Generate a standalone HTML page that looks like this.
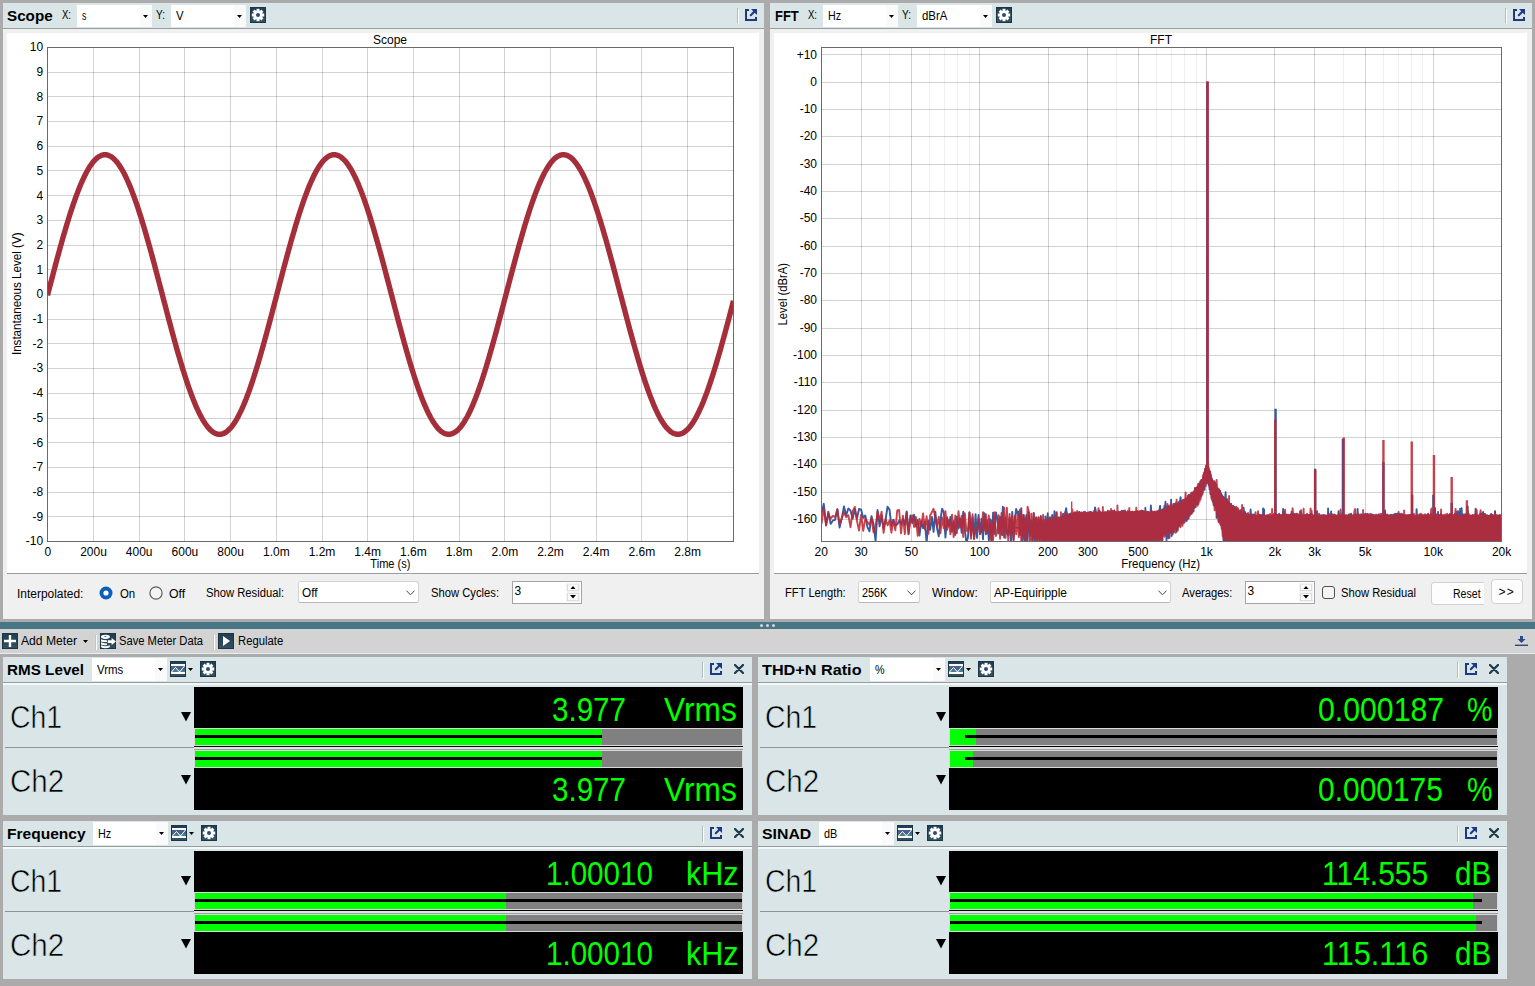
<!DOCTYPE html>
<html><head><meta charset="utf-8"><title>APx500 - Scope / FFT / Meters</title>
<style>
html,body{margin:0;padding:0}
body{width:1535px;height:986px;background:#ababab;position:relative;overflow:hidden;font-family:"Liberation Sans",sans-serif;font-size:12px}
.b,.a{position:absolute;display:block}
section{display:contents}
.t{position:absolute;display:inline-block;white-space:nowrap;transform-origin:0 0}
</style></head><body>
<svg class="a" width="0" height="0" style="left:0;top:0"><defs><linearGradient id="sl" x1="0" y1="0" x2="0" y2="1"><stop offset="0" stop-color="#213e51"/><stop offset="1" stop-color="#36505f"/></linearGradient></defs></svg>
<section aria-label="Scope panel">
<div class="b" style="left:3px;top:3px;width:761px;height:616px;background:#f0f0f0;"></div>
<div class="b" style="left:3px;top:3px;width:761px;height:25px;background:#dae5e7;"></div>
<div class="b" style="left:3px;top:28px;width:761px;height:1px;background:#979c9e;"></div>
<div class="b" style="left:7px;top:33px;width:752px;height:540px;background:#fff;"></div>
<div class="b" style="left:7px;top:573px;width:752px;height:1px;background:#9c9c9c;"></div>
<span class="t" style="left:7.30px;top:7px;font-size:15px;line-height:17px;color:#000;font-weight:bold;transform:scaleX(1.0133);">Scope</span>
<span class="t" style="left:62.40px;top:8.3px;font-size:12px;line-height:14px;color:#000;transform:scaleX(0.7956);">X:</span>
<div class="b" style="left:77px;top:5px;width:75px;height:22px;background:#fff;"></div>
<div class="b" style="left:140px;top:5px;width:12px;height:22px;background:#fafafa;"></div>
<svg class="a" style="left:143px;top:15px" width="5" height="3" viewBox="0 0 5 3"><path d="M0 0H5L2.5 3Z" fill="#000"/></svg>
<span class="t" style="left:81.50px;top:8.5px;font-size:12px;line-height:14px;color:#000;transform:scaleX(0.7333);">s</span>
<span class="t" style="left:156.00px;top:8.3px;font-size:12px;line-height:14px;color:#000;transform:scaleX(0.8421);">Y:</span>
<div class="b" style="left:171px;top:5px;width:75px;height:22px;background:#fff;"></div>
<div class="b" style="left:234px;top:5px;width:12px;height:22px;background:#fafafa;"></div>
<svg class="a" style="left:237px;top:15px" width="5" height="3" viewBox="0 0 5 3"><path d="M0 0H5L2.5 3Z" fill="#000"/></svg>
<span class="t" style="left:175.50px;top:8.5px;font-size:12px;line-height:14px;color:#000;transform:scaleX(0.9500);">V</span>
<svg class="a" style="left:250px;top:7px" width="16" height="16" viewBox="0 0 16 16"><rect width="16" height="16" fill="#1a374a"/><rect x="1" y="1" width="14" height="14" fill="url(#sl)"/><g transform="translate(8,8)" fill="#fff"><rect x="-1.5" y="-6.2" width="3" height="3" transform="rotate(0)"/><rect x="-1.5" y="-6.2" width="3" height="3" transform="rotate(45)"/><rect x="-1.5" y="-6.2" width="3" height="3" transform="rotate(90)"/><rect x="-1.5" y="-6.2" width="3" height="3" transform="rotate(135)"/><rect x="-1.5" y="-6.2" width="3" height="3" transform="rotate(180)"/><rect x="-1.5" y="-6.2" width="3" height="3" transform="rotate(225)"/><rect x="-1.5" y="-6.2" width="3" height="3" transform="rotate(270)"/><rect x="-1.5" y="-6.2" width="3" height="3" transform="rotate(315)"/><circle r="4.6"/><circle r="2" fill="#2f4a78"/></g></svg>
<div class="b" style="left:737px;top:8px;width:1px;height:15px;background:#b4bcbe;"></div>
<div class="b" style="left:738px;top:9px;width:1px;height:15px;background:#fff;"></div>
<svg class="a" style="left:745px;top:9px" width="12" height="12" viewBox="0 0 12 12"><path d="M4 0H0V12H12V8H10V10H2V2H4Z" fill="#1b3a82"/><path d="M6 0H12V6Z" fill="#1b3a82"/><path d="M10 2L5.8 6.2" stroke="#1b3a82" stroke-width="2" stroke-linecap="round"/></svg>
</section>
<section aria-label="FFT panel">
<div class="b" style="left:770px;top:3px;width:762px;height:616px;background:#f0f0f0;"></div>
<div class="b" style="left:770px;top:3px;width:762px;height:25px;background:#dae5e7;"></div>
<div class="b" style="left:770px;top:28px;width:762px;height:1px;background:#979c9e;"></div>
<div class="b" style="left:774px;top:33px;width:753px;height:540px;background:#fff;"></div>
<div class="b" style="left:774px;top:573px;width:753px;height:1px;background:#9c9c9c;"></div>
<span class="t" style="left:775.00px;top:7px;font-size:15px;line-height:17px;color:#000;font-weight:bold;transform:scaleX(0.8655);">FFT</span>
<span class="t" style="left:808.20px;top:8.3px;font-size:12px;line-height:14px;color:#000;transform:scaleX(0.7956);">X:</span>
<div class="b" style="left:823px;top:5px;width:75px;height:22px;background:#fff;"></div>
<div class="b" style="left:886px;top:5px;width:12px;height:22px;background:#fafafa;"></div>
<svg class="a" style="left:889px;top:15px" width="5" height="3" viewBox="0 0 5 3"><path d="M0 0H5L2.5 3Z" fill="#000"/></svg>
<span class="t" style="left:827.50px;top:8.5px;font-size:12px;line-height:14px;color:#000;transform:scaleX(0.8919);">Hz</span>
<span class="t" style="left:902.20px;top:8.3px;font-size:12px;line-height:14px;color:#000;transform:scaleX(0.8421);">Y:</span>
<div class="b" style="left:917px;top:5px;width:75px;height:22px;background:#fff;"></div>
<div class="b" style="left:980px;top:5px;width:12px;height:22px;background:#fafafa;"></div>
<svg class="a" style="left:983px;top:15px" width="5" height="3" viewBox="0 0 5 3"><path d="M0 0H5L2.5 3Z" fill="#000"/></svg>
<span class="t" style="left:921.50px;top:8.5px;font-size:12px;line-height:14px;color:#000;transform:scaleX(0.9518);">dBrA</span>
<svg class="a" style="left:996px;top:7px" width="16" height="16" viewBox="0 0 16 16"><rect width="16" height="16" fill="#1a374a"/><rect x="1" y="1" width="14" height="14" fill="url(#sl)"/><g transform="translate(8,8)" fill="#fff"><rect x="-1.5" y="-6.2" width="3" height="3" transform="rotate(0)"/><rect x="-1.5" y="-6.2" width="3" height="3" transform="rotate(45)"/><rect x="-1.5" y="-6.2" width="3" height="3" transform="rotate(90)"/><rect x="-1.5" y="-6.2" width="3" height="3" transform="rotate(135)"/><rect x="-1.5" y="-6.2" width="3" height="3" transform="rotate(180)"/><rect x="-1.5" y="-6.2" width="3" height="3" transform="rotate(225)"/><rect x="-1.5" y="-6.2" width="3" height="3" transform="rotate(270)"/><rect x="-1.5" y="-6.2" width="3" height="3" transform="rotate(315)"/><circle r="4.6"/><circle r="2" fill="#2f4a78"/></g></svg>
<div class="b" style="left:1505px;top:8px;width:1px;height:15px;background:#b4bcbe;"></div>
<div class="b" style="left:1506px;top:9px;width:1px;height:15px;background:#fff;"></div>
<svg class="a" style="left:1513px;top:9px" width="12" height="12" viewBox="0 0 12 12"><path d="M4 0H0V12H12V8H10V10H2V2H4Z" fill="#1b3a82"/><path d="M6 0H12V6Z" fill="#1b3a82"/><path d="M10 2L5.8 6.2" stroke="#1b3a82" stroke-width="2" stroke-linecap="round"/></svg>
</section>
<section aria-label="Graphs">
<svg class="a" style="left:7px;top:33px" width="752" height="540" viewBox="7 33 752 540" font-family="Liberation Sans, sans-serif"><path d="M47.5 72.5H733.5M47.5 96.5H733.5M47.5 121.5H733.5M47.5 146.5H733.5M47.5 170.5H733.5M47.5 195.5H733.5M47.5 220.5H733.5M47.5 245.5H733.5M47.5 269.5H733.5M47.5 294.5H733.5M47.5 319.5H733.5M47.5 343.5H733.5M47.5 368.5H733.5M47.5 393.5H733.5M47.5 418.5H733.5M47.5 442.5H733.5M47.5 467.5H733.5M47.5 492.5H733.5M47.5 516.5H733.5" stroke="rgba(0,0,0,0.175)" stroke-width="1" fill="none"/><path d="M93.5 47.5V541.5M139.5 47.5V541.5M184.5 47.5V541.5M230.5 47.5V541.5M276.5 47.5V541.5M322.5 47.5V541.5M367.5 47.5V541.5M413.5 47.5V541.5M459.5 47.5V541.5M504.5 47.5V541.5M550.5 47.5V541.5M596.5 47.5V541.5M641.5 47.5V541.5M687.5 47.5V541.5" stroke="rgba(0,0,0,0.175)" stroke-width="1" fill="none"/><rect x="47.5" y="47.5" width="686.0" height="494.0" fill="none" stroke="#6a6a6a" stroke-width="1"/><clipPath id="cs"><rect x="47.5" y="47.5" width="686.0" height="494.0"/></clipPath><path clip-path="url(#cs)" d="M47.5 295.3L48.5 291.4L49.5 287.6L50.5 283.8L51.5 280.0L52.5 276.2L53.5 272.4L54.5 268.6L55.5 264.8L56.5 261.1L57.5 257.4L58.5 253.7L59.5 250.1L60.5 246.4L61.5 242.9L62.5 239.3L63.5 235.8L64.5 232.4L65.5 228.9L66.5 225.6L67.5 222.3L68.5 219.0L69.5 215.8L70.5 212.7L71.5 209.6L72.5 206.6L73.5 203.6L74.5 200.8L75.5 198.0L76.5 195.2L77.5 192.6L78.5 190.0L79.5 187.5L80.5 185.0L81.5 182.7L82.5 180.4L83.5 178.3L84.5 176.2L85.5 174.2L86.5 172.3L87.5 170.5L88.5 168.7L89.5 167.1L90.5 165.6L91.5 164.2L92.5 162.8L93.5 161.6L94.5 160.4L95.5 159.4L96.5 158.5L97.5 157.6L98.5 156.9L99.5 156.3L100.5 155.8L101.5 155.3L102.5 155.0L103.5 154.8L104.5 154.7L105.5 154.7L106.5 154.8L107.5 155.0L108.5 155.3L109.5 155.8L110.5 156.3L111.5 156.9L112.5 157.7L113.5 158.5L114.5 159.4L115.5 160.5L116.5 161.6L117.5 162.8L118.5 164.2L119.5 165.6L120.5 167.2L121.5 168.8L122.5 170.5L123.5 172.3L124.5 174.2L125.5 176.2L126.5 178.3L127.5 180.5L128.5 182.8L129.5 185.1L130.5 187.5L131.5 190.0L132.5 192.6L133.5 195.3L134.5 198.0L135.5 200.8L136.5 203.7L137.5 206.7L138.5 209.7L139.5 212.8L140.5 215.9L141.5 219.1L142.5 222.4L143.5 225.7L144.5 229.0L145.5 232.4L146.5 235.9L147.5 239.4L148.5 242.9L149.5 246.5L150.5 250.1L151.5 253.8L152.5 257.5L153.5 261.2L154.5 264.9L155.5 268.7L156.5 272.5L157.5 276.2L158.5 280.1L159.5 283.9L160.5 287.7L161.5 291.5L162.5 295.4L163.5 299.2L164.5 303.0L165.5 306.8L166.5 310.7L167.5 314.5L168.5 318.2L169.5 322.0L170.5 325.8L171.5 329.5L172.5 333.2L173.5 336.9L174.5 340.5L175.5 344.1L176.5 347.7L177.5 351.2L178.5 354.7L179.5 358.1L180.5 361.5L181.5 364.8L182.5 368.1L183.5 371.3L184.5 374.5L185.5 377.6L186.5 380.7L187.5 383.7L188.5 386.6L189.5 389.4L190.5 392.2L191.5 394.9L192.5 397.5L193.5 400.1L194.5 402.6L195.5 405.0L196.5 407.3L197.5 409.5L198.5 411.6L199.5 413.7L200.5 415.6L201.5 417.5L202.5 419.3L203.5 421.0L204.5 422.5L205.5 424.0L206.5 425.4L207.5 426.7L208.5 427.9L209.5 429.0L210.5 430.0L211.5 430.9L212.5 431.7L213.5 432.4L214.5 433.0L215.5 433.4L216.5 433.8L217.5 434.1L218.5 434.2L219.5 434.3L220.5 434.3L221.5 434.1L222.5 433.8L223.5 433.5L224.5 433.0L225.5 432.5L226.5 431.8L227.5 431.0L228.5 430.1L229.5 429.1L230.5 428.1L231.5 426.9L232.5 425.6L233.5 424.2L234.5 422.7L235.5 421.2L236.5 419.5L237.5 417.7L238.5 415.9L239.5 413.9L240.5 411.9L241.5 409.8L242.5 407.5L243.5 405.3L244.5 402.9L245.5 400.4L246.5 397.9L247.5 395.2L248.5 392.6L249.5 389.8L250.5 386.9L251.5 384.0L252.5 381.1L253.5 378.0L254.5 374.9L255.5 371.7L256.5 368.5L257.5 365.2L258.5 361.9L259.5 358.5L260.5 355.1L261.5 351.6L262.5 348.1L263.5 344.5L264.5 340.9L265.5 337.3L266.5 333.6L267.5 329.9L268.5 326.2L269.5 322.5L270.5 318.7L271.5 314.9L272.5 311.1L273.5 307.3L274.5 303.5L275.5 299.7L276.5 295.8L277.5 292.0L278.5 288.2L279.5 284.4L280.5 280.5L281.5 276.7L282.5 272.9L283.5 269.1L284.5 265.4L285.5 261.7L286.5 257.9L287.5 254.3L288.5 250.6L289.5 247.0L290.5 243.4L291.5 239.8L292.5 236.3L293.5 232.9L294.5 229.5L295.5 226.1L296.5 222.8L297.5 219.5L298.5 216.3L299.5 213.2L300.5 210.1L301.5 207.0L302.5 204.1L303.5 201.2L304.5 198.4L305.5 195.6L306.5 193.0L307.5 190.4L308.5 187.8L309.5 185.4L310.5 183.0L311.5 180.8L312.5 178.6L313.5 176.5L314.5 174.5L315.5 172.6L316.5 170.7L317.5 169.0L318.5 167.4L319.5 165.8L320.5 164.4L321.5 163.0L322.5 161.8L323.5 160.6L324.5 159.6L325.5 158.6L326.5 157.8L327.5 157.0L328.5 156.4L329.5 155.8L330.5 155.4L331.5 155.1L332.5 154.8L333.5 154.7L334.5 154.7L335.5 154.8L336.5 155.0L337.5 155.3L338.5 155.7L339.5 156.2L340.5 156.8L341.5 157.5L342.5 158.4L343.5 159.3L344.5 160.3L345.5 161.4L346.5 162.7L347.5 164.0L348.5 165.4L349.5 166.9L350.5 168.5L351.5 170.2L352.5 172.0L353.5 173.9L354.5 175.9L355.5 178.0L356.5 180.2L357.5 182.4L358.5 184.7L359.5 187.2L360.5 189.7L361.5 192.2L362.5 194.9L363.5 197.6L364.5 200.4L365.5 203.3L366.5 206.2L367.5 209.2L368.5 212.3L369.5 215.4L370.5 218.6L371.5 221.9L372.5 225.2L373.5 228.5L374.5 231.9L375.5 235.4L376.5 238.9L377.5 242.4L378.5 246.0L379.5 249.6L380.5 253.2L381.5 256.9L382.5 260.6L383.5 264.4L384.5 268.1L385.5 271.9L386.5 275.7L387.5 279.5L388.5 283.3L389.5 287.1L390.5 291.0L391.5 294.8L392.5 298.6L393.5 302.4L394.5 306.3L395.5 310.1L396.5 313.9L397.5 317.7L398.5 321.5L399.5 325.2L400.5 328.9L401.5 332.6L402.5 336.3L403.5 339.9L404.5 343.6L405.5 347.1L406.5 350.7L407.5 354.1L408.5 357.6L409.5 361.0L410.5 364.3L411.5 367.6L412.5 370.9L413.5 374.0L414.5 377.2L415.5 380.2L416.5 383.2L417.5 386.2L418.5 389.0L419.5 391.8L420.5 394.5L421.5 397.2L422.5 399.7L423.5 402.2L424.5 404.6L425.5 406.9L426.5 409.2L427.5 411.3L428.5 413.4L429.5 415.3L430.5 417.2L431.5 419.0L432.5 420.7L433.5 422.3L434.5 423.8L435.5 425.2L436.5 426.5L437.5 427.7L438.5 428.9L439.5 429.9L440.5 430.8L441.5 431.6L442.5 432.3L443.5 432.9L444.5 433.4L445.5 433.8L446.5 434.0L447.5 434.2L448.5 434.3L449.5 434.3L450.5 434.1L451.5 433.9L452.5 433.5L453.5 433.1L454.5 432.5L455.5 431.9L456.5 431.1L457.5 430.3L458.5 429.3L459.5 428.2L460.5 427.1L461.5 425.8L462.5 424.4L463.5 423.0L464.5 421.4L465.5 419.7L466.5 418.0L467.5 416.2L468.5 414.2L469.5 412.2L470.5 410.1L471.5 407.9L472.5 405.6L473.5 403.2L474.5 400.8L475.5 398.3L476.5 395.6L477.5 393.0L478.5 390.2L479.5 387.4L480.5 384.5L481.5 381.5L482.5 378.5L483.5 375.4L484.5 372.2L485.5 369.0L486.5 365.7L487.5 362.4L488.5 359.0L489.5 355.6L490.5 352.1L491.5 348.6L492.5 345.1L493.5 341.5L494.5 337.9L495.5 334.2L496.5 330.5L497.5 326.8L498.5 323.0L499.5 319.3L500.5 315.5L501.5 311.7L502.5 307.9L503.5 304.1L504.5 300.2L505.5 296.4L506.5 292.6L507.5 288.8L508.5 284.9L509.5 281.1L510.5 277.3L511.5 273.5L512.5 269.7L513.5 266.0L514.5 262.2L515.5 258.5L516.5 254.8L517.5 251.1L518.5 247.5L519.5 243.9L520.5 240.4L521.5 236.9L522.5 233.4L523.5 230.0L524.5 226.6L525.5 223.3L526.5 220.0L527.5 216.8L528.5 213.6L529.5 210.5L530.5 207.5L531.5 204.5L532.5 201.6L533.5 198.8L534.5 196.0L535.5 193.4L536.5 190.7L537.5 188.2L538.5 185.8L539.5 183.4L540.5 181.1L541.5 178.9L542.5 176.8L543.5 174.8L544.5 172.8L545.5 171.0L546.5 169.3L547.5 167.6L548.5 166.0L549.5 164.6L550.5 163.2L551.5 161.9L552.5 160.8L553.5 159.7L554.5 158.7L555.5 157.9L556.5 157.1L557.5 156.5L558.5 155.9L559.5 155.5L560.5 155.1L561.5 154.9L562.5 154.7L563.5 154.7L564.5 154.8L565.5 155.0L566.5 155.2L567.5 155.6L568.5 156.1L569.5 156.7L570.5 157.4L571.5 158.2L572.5 159.1L573.5 160.1L574.5 161.3L575.5 162.5L576.5 163.8L577.5 165.2L578.5 166.7L579.5 168.3L580.5 170.0L581.5 171.8L582.5 173.7L583.5 175.6L584.5 177.7L585.5 179.8L586.5 182.1L587.5 184.4L588.5 186.8L589.5 189.3L590.5 191.8L591.5 194.5L592.5 197.2L593.5 200.0L594.5 202.8L595.5 205.8L596.5 208.8L597.5 211.8L598.5 215.0L599.5 218.1L600.5 221.4L601.5 224.7L602.5 228.0L603.5 231.4L604.5 234.9L605.5 238.3L606.5 241.9L607.5 245.4L608.5 249.1L609.5 252.7L610.5 256.4L611.5 260.1L612.5 263.8L613.5 267.5L614.5 271.3L615.5 275.1L616.5 278.9L617.5 282.7L618.5 286.6L619.5 290.4L620.5 294.2L621.5 298.0L622.5 301.9L623.5 305.7L624.5 309.5L625.5 313.3L626.5 317.1L627.5 320.9L628.5 324.6L629.5 328.4L630.5 332.1L631.5 335.8L632.5 339.4L633.5 343.0L634.5 346.6L635.5 350.1L636.5 353.6L637.5 357.1L638.5 360.5L639.5 363.8L640.5 367.1L641.5 370.4L642.5 373.6L643.5 376.7L644.5 379.8L645.5 382.8L646.5 385.7L647.5 388.6L648.5 391.4L649.5 394.1L650.5 396.8L651.5 399.3L652.5 401.8L653.5 404.3L654.5 406.6L655.5 408.8L656.5 411.0L657.5 413.1L658.5 415.1L659.5 417.0L660.5 418.8L661.5 420.5L662.5 422.1L663.5 423.6L664.5 425.0L665.5 426.3L666.5 427.6L667.5 428.7L668.5 429.7L669.5 430.6L670.5 431.5L671.5 432.2L672.5 432.8L673.5 433.3L674.5 433.7L675.5 434.0L676.5 434.2L677.5 434.3L678.5 434.3L679.5 434.2L680.5 433.9L681.5 433.6L682.5 433.2L683.5 432.6L684.5 432.0L685.5 431.2L686.5 430.4L687.5 429.4L688.5 428.4L689.5 427.2L690.5 426.0L691.5 424.6L692.5 423.2L693.5 421.6L694.5 420.0L695.5 418.3L696.5 416.4L697.5 414.5L698.5 412.5L699.5 410.4L700.5 408.2L701.5 406.0L702.5 403.6L703.5 401.2L704.5 398.6L705.5 396.0L706.5 393.4L707.5 390.6L708.5 387.8L709.5 384.9L710.5 382.0L711.5 378.9L712.5 375.8L713.5 372.7L714.5 369.5L715.5 366.2L716.5 362.9L717.5 359.5L718.5 356.1L719.5 352.7L720.5 349.2L721.5 345.6L722.5 342.0L723.5 338.4L724.5 334.7L725.5 331.1L726.5 327.3L727.5 323.6L728.5 319.9L729.5 316.1L730.5 312.3L731.5 308.5L732.5 304.6L733.5 300.8" stroke="#a52e3b" stroke-width="5.4" fill="none" stroke-linejoin="round"/><text x="43.2" y="51.3" font-size="12" text-anchor="end" fill="#000">10</text><text x="43.2" y="76.0" font-size="12" text-anchor="end" fill="#000">9</text><text x="43.2" y="100.7" font-size="12" text-anchor="end" fill="#000">8</text><text x="43.2" y="125.4" font-size="12" text-anchor="end" fill="#000">7</text><text x="43.2" y="150.1" font-size="12" text-anchor="end" fill="#000">6</text><text x="43.2" y="174.8" font-size="12" text-anchor="end" fill="#000">5</text><text x="43.2" y="199.5" font-size="12" text-anchor="end" fill="#000">4</text><text x="43.2" y="224.2" font-size="12" text-anchor="end" fill="#000">3</text><text x="43.2" y="248.9" font-size="12" text-anchor="end" fill="#000">2</text><text x="43.2" y="273.6" font-size="12" text-anchor="end" fill="#000">1</text><text x="43.2" y="298.3" font-size="12" text-anchor="end" fill="#000">0</text><text x="43.2" y="323.0" font-size="12" text-anchor="end" fill="#000">-1</text><text x="43.2" y="347.7" font-size="12" text-anchor="end" fill="#000">-2</text><text x="43.2" y="372.4" font-size="12" text-anchor="end" fill="#000">-3</text><text x="43.2" y="397.1" font-size="12" text-anchor="end" fill="#000">-4</text><text x="43.2" y="421.8" font-size="12" text-anchor="end" fill="#000">-5</text><text x="43.2" y="446.5" font-size="12" text-anchor="end" fill="#000">-6</text><text x="43.2" y="471.2" font-size="12" text-anchor="end" fill="#000">-7</text><text x="43.2" y="495.9" font-size="12" text-anchor="end" fill="#000">-8</text><text x="43.2" y="520.6" font-size="12" text-anchor="end" fill="#000">-9</text><text x="43.2" y="545.3" font-size="12" text-anchor="end" fill="#000">-10</text><text x="47.8" y="556" font-size="12" text-anchor="middle" fill="#000">0</text><text x="93.5" y="556" font-size="12" text-anchor="middle" fill="#000">200u</text><text x="139.2" y="556" font-size="12" text-anchor="middle" fill="#000">400u</text><text x="184.9" y="556" font-size="12" text-anchor="middle" fill="#000">600u</text><text x="230.6" y="556" font-size="12" text-anchor="middle" fill="#000">800u</text><text x="276.3" y="556" font-size="12" text-anchor="middle" fill="#000">1.0m</text><text x="322.0" y="556" font-size="12" text-anchor="middle" fill="#000">1.2m</text><text x="367.7" y="556" font-size="12" text-anchor="middle" fill="#000">1.4m</text><text x="413.4" y="556" font-size="12" text-anchor="middle" fill="#000">1.6m</text><text x="459.1" y="556" font-size="12" text-anchor="middle" fill="#000">1.8m</text><text x="504.8" y="556" font-size="12" text-anchor="middle" fill="#000">2.0m</text><text x="550.5" y="556" font-size="12" text-anchor="middle" fill="#000">2.2m</text><text x="596.2" y="556" font-size="12" text-anchor="middle" fill="#000">2.4m</text><text x="641.9" y="556" font-size="12" text-anchor="middle" fill="#000">2.6m</text><text x="687.6" y="556" font-size="12" text-anchor="middle" fill="#000">2.8m</text><text x="390" y="44" font-size="12" text-anchor="middle" fill="#000">Scope</text><text x="390.4" y="568" font-size="12" text-anchor="middle" fill="#000" textLength="40.1" lengthAdjust="spacingAndGlyphs">Time (s)</text><text x="21" y="293.8" font-size="12" text-anchor="middle" fill="#000" textLength="122.6" lengthAdjust="spacingAndGlyphs" transform="rotate(-90 21 293.8)">Instantaneous Level (V)</text></svg>
<svg class="a" style="left:774px;top:33px" width="753" height="540" viewBox="774 33 753 540" font-family="Liberation Sans, sans-serif"><path d="M889.5 47.5V541.5M929.5 47.5V541.5M944.5 47.5V541.5M957.5 47.5V541.5M969.5 47.5V541.5M1116.5 47.5V541.5M1156.5 47.5V541.5M1171.5 47.5V541.5M1184.5 47.5V541.5M1196.5 47.5V541.5M1343.5 47.5V541.5M1383.5 47.5V541.5M1398.5 47.5V541.5M1411.5 47.5V541.5M1422.5 47.5V541.5" stroke="rgba(0,0,0,0.06)" stroke-width="1" fill="none"/><path d="M821.5 54.5H1501.5M821.5 82.5H1501.5M821.5 109.5H1501.5M821.5 136.5H1501.5M821.5 164.5H1501.5M821.5 191.5H1501.5M821.5 218.5H1501.5M821.5 246.5H1501.5M821.5 273.5H1501.5M821.5 300.5H1501.5M821.5 328.5H1501.5M821.5 355.5H1501.5M821.5 382.5H1501.5M821.5 410.5H1501.5M821.5 437.5H1501.5M821.5 464.5H1501.5M821.5 492.5H1501.5M821.5 519.5H1501.5" stroke="rgba(0,0,0,0.175)" stroke-width="1" fill="none"/><path d="M861.5 47.5V541.5M911.5 47.5V541.5M979.5 47.5V541.5M1048.5 47.5V541.5M1087.5 47.5V541.5M1138.5 47.5V541.5M1206.5 47.5V541.5M1274.5 47.5V541.5M1314.5 47.5V541.5M1365.5 47.5V541.5M1433.5 47.5V541.5" stroke="rgba(0,0,0,0.175)" stroke-width="1" fill="none"/><clipPath id="cf"><rect x="821.5" y="47.5" width="680.0" height="493.5"/></clipPath><g clip-path="url(#cf)"><path d="M821.50 513.1L823.80 503.8L826.09 525.5L828.36 511.7L830.63 523.9L832.88 520.5L835.12 519.8L837.35 509.1L839.57 527.5L841.78 518.3L843.97 506.5L846.16 515.3L848.33 508.5L850.49 510.4L852.64 518.8L854.78 509.1L856.91 518.9L859.02 509.0L861.13 509.7L863.23 517.9L865.31 515.4L867.38 526.8L869.45 531.3L871.50 516.1L873.54 524.0L875.57 541.2L877.59 510.0L879.60 526.2L881.60 515.8L883.59 528.6L885.57 519.5L887.54 506.7L889.50 509.6L891.45 525.7L893.39 519.6L895.32 525.6L897.23 524.5L899.14 520.6L901.04 524.2L902.93 518.8L904.81 524.8L906.68 511.4L908.54 533.7L910.39 515.4L912.23 523.1L914.06 514.8L915.88 526.6L917.70 520.0L919.50 535.6L921.29 521.1L923.08 528.2L924.85 521.5L926.62 543.4L928.37 520.6L930.12 529.8L931.86 516.9L933.59 531.9L935.31 511.7L937.02 528.1L938.73 536.4L940.42 520.0L942.11 508.6L943.78 512.4L945.45 537.5L947.11 517.3L948.76 526.6L950.41 517.0L952.04 531.9L953.66 521.3L955.28 535.0L956.89 516.7L958.49 528.6L960.08 518.5L961.67 532.7L963.24 511.7L964.81 529.7L966.37 542.8L967.92 537.8L969.47 512.6L971.00 535.7L972.53 517.2L974.05 538.4L975.56 514.2L977.06 537.9L978.56 515.0L980.05 534.1L981.53 518.6L983.00 539.2L984.47 513.3L985.93 534.3L987.38 520.1L988.82 540.2L990.26 519.3L991.68 540.8L993.10 512.6L994.52 533.9L995.92 512.5L997.32 517.9L998.71 533.2L1000.10 516.9L1001.48 534.7L1002.85 506.7L1004.21 537.5L1005.56 517.8L1006.91 533.4L1008.26 535.5L1009.59 517.7L1010.92 542.6L1012.24 511.9L1013.55 539.8L1014.86 520.2L1016.16 508.9L1017.46 513.3L1018.75 511.6L1020.03 535.3L1021.30 508.1L1022.57 544.0L1023.83 514.9L1025.08 543.1L1026.33 515.2L1027.57 542.2L1028.81 512.2L1030.04 536.0L1031.26 520.6L1032.48 541.9L1033.69 513.2L1034.89 544.9L1036.09 517.9L1037.28 540.4L1038.46 517.5L1039.64 540.3L1040.82 515.9L1041.98 546.6L1043.14 520.4L1044.30 545.9L1045.45 516.4L1046.59 545.0L1047.73 513.2L1048.86 544.0L1049.98 517.2L1051.10 545.2L1052.22 515.0L1053.33 544.6L1054.43 511.2L1055.52 545.0L1056.61 512.2L1057.70 548.7L1058.78 517.1L1059.85 546.5L1060.92 516.7L1061.99 545.8L1063.04 513.6L1064.09 546.6L1065.14 513.6L1066.18 508.1L1067.22 519.1L1068.25 545.4L1069.27 513.9L1070.29 549.6L1071.31 513.3L1072.32 546.7L1073.32 513.5L1074.32 547.7L1075.31 519.3L1076.30 550.6L1077.29 518.7L1078.27 548.1L1079.24 511.9L1080.21 544.6L1081.17 518.6L1082.13 545.6L1083.08 513.4L1084.03 547.9L1084.97 511.8L1085.91 549.6L1086.85 513.8L1087.78 550.7L1088.70 517.8L1089.62 545.9L1090.53 517.6L1091.44 548.3L1092.35 513.9L1093.25 551.2L1094.15 520.4L1095.04 507.5L1095.92 511.4L1096.81 550.8L1097.68 513.6L1098.56 542.7L1099.43 510.7L1100.29 544.5L1101.15 519.3L1102.00 551.9L1102.85 520.8L1103.70 545.6L1104.54 515.7L1105.38 552.0L1106.21 513.6L1107.04 549.3L1107.87 511.4L1108.69 542.6L1109.50 516.5L1110.32 552.1L1111.12 511.1L1111.93 550.5L1112.73 512.0L1113.52 544.0L1114.31 510.5L1115.10 551.6L1115.88 515.5L1116.66 548.1L1117.44 517.4L1118.21 548.9L1118.98 513.1L1119.74 545.1L1120.50 512.0L1121.25 548.1L1122.00 510.6L1122.75 550.8L1123.50 511.5L1124.24 549.9L1124.97 510.5L1125.70 547.8L1126.43 515.3L1127.16 552.1L1127.88 517.3L1128.59 543.9L1129.31 520.2L1130.02 548.7L1130.72 514.9L1131.43 545.9L1132.12 517.2L1132.82 547.0L1133.51 514.0L1134.20 543.9L1134.88 516.9L1135.56 548.9L1136.24 514.7L1136.91 542.6L1137.59 511.0L1138.25 551.9L1138.92 513.7L1139.58 550.9L1140.23 517.1L1140.89 549.1L1141.54 510.7L1142.18 544.3L1142.82 511.1L1143.46 547.5L1144.10 512.1L1144.73 551.2L1145.36 507.8L1145.99 544.7L1146.61 517.5L1147.23 542.7L1147.85 512.0L1148.47 546.5L1149.08 517.0L1149.68 542.1L1150.29 519.7L1150.89 505.5L1151.49 515.8L1152.08 547.0L1152.67 516.3L1153.26 542.4L1153.85 518.7L1154.43 545.6L1155.01 512.6L1155.59 545.6L1156.16 513.0L1156.73 546.8L1157.30 513.9L1157.87 545.3L1158.43 511.1L1158.99 543.7L1159.54 509.4L1160.10 505.9L1160.65 512.8L1161.20 539.5L1161.74 513.7L1162.28 542.4L1162.82 516.6L1163.36 534.1L1163.89 511.0L1164.42 506.0L1164.95 510.8L1165.48 501.7L1166.00 509.4L1166.52 540.4L1167.04 513.6L1167.55 537.5L1168.06 506.0L1168.57 538.3L1169.08 507.3L1169.58 531.8L1170.09 509.3L1170.59 532.9L1171.09 499.8L1171.59 536.0L1172.09 510.3L1172.59 534.5L1173.09 511.5L1173.59 532.0L1174.09 503.6L1174.59 528.7L1175.09 509.7L1175.59 525.9L1176.09 502.9L1176.59 531.7L1177.09 504.7L1177.59 530.4L1178.09 507.5L1178.59 526.4L1179.09 501.6L1179.59 526.3L1180.09 501.0L1180.59 497.1L1181.09 502.0L1181.59 523.1L1182.09 505.9L1182.59 520.6L1183.09 499.9L1183.59 521.6L1184.09 503.0L1184.59 522.4L1185.09 500.7L1185.59 517.0L1186.09 501.4L1186.59 521.0L1187.09 499.1L1187.59 517.7L1188.09 495.4L1188.59 518.6L1189.09 494.7L1189.59 515.7L1190.09 496.9L1190.59 514.1L1191.09 496.1L1191.59 513.1L1192.09 494.6L1192.59 507.9L1193.09 495.4L1193.59 511.3L1194.09 491.6L1194.59 506.3L1195.09 488.0L1195.59 507.2L1196.09 488.6L1196.59 503.8L1197.09 490.6L1197.59 504.1L1198.09 486.7L1198.59 499.4L1199.09 483.5L1199.59 498.4L1200.09 485.8L1200.59 496.8L1201.09 480.1L1201.59 495.8L1202.09 481.1L1202.59 492.5L1203.09 479.1L1203.59 489.7L1204.09 472.4L1204.59 489.8L1205.09 468.9L1205.59 484.6L1206.09 465.4L1206.59 481.8L1207.09 466.0L1207.59 477.9L1208.09 466.2L1208.59 485.0L1209.09 471.5L1209.59 489.4L1210.09 472.0L1210.59 494.3L1211.09 478.1L1211.59 497.4L1212.09 479.2L1212.59 501.6L1213.09 483.5L1213.59 505.0L1214.09 481.5L1214.59 505.9L1215.09 482.8L1215.59 507.9L1216.09 484.5L1216.59 517.9L1217.09 488.1L1217.59 514.9L1218.09 490.5L1218.59 520.7L1219.09 490.1L1219.59 519.1L1220.09 490.6L1220.59 522.2L1221.09 493.4L1221.59 524.4L1222.09 499.9L1222.59 530.5L1223.09 497.2L1223.59 540.2L1224.09 500.9L1224.59 542.1L1225.09 499.7L1225.59 492.3L1226.09 504.2L1226.59 551.7L1227.09 499.1L1227.59 544.2L1228.09 501.8L1228.59 546.1L1229.09 502.3L1229.59 543.6L1230.09 504.9L1230.59 540.1L1231.09 503.8L1231.59 545.3L1232.09 506.7L1232.59 547.9L1233.09 506.2L1233.59 547.7L1234.09 514.3L1234.59 541.8L1235.09 509.4L1235.59 551.0L1236.09 514.7L1236.59 549.2L1237.09 511.5L1237.59 551.7L1238.09 514.1L1238.59 551.6L1239.09 514.2L1239.59 544.8L1240.09 512.0L1240.59 546.1L1241.09 510.2L1241.59 545.3L1242.09 514.2L1242.59 546.1L1243.09 516.8L1243.59 507.7L1244.09 512.4L1244.59 546.0L1245.09 512.0L1245.59 543.3L1246.09 515.7L1246.59 550.0L1247.09 514.8L1247.59 547.0L1248.09 520.3L1248.59 549.9L1249.09 518.1L1249.59 545.4L1250.09 516.0L1250.59 509.5L1251.09 516.7L1251.59 546.3L1252.09 514.5L1252.59 550.8L1253.09 514.9L1253.59 543.1L1254.09 514.5L1254.59 545.3L1255.09 515.4L1255.59 549.5L1256.09 517.2L1256.59 544.2L1257.09 523.0L1257.59 551.6L1258.09 513.9L1258.59 547.8L1259.09 515.8L1259.59 549.8L1260.09 515.7L1260.59 551.2L1261.09 518.8L1261.59 551.5L1262.09 516.3L1262.59 542.6L1263.09 508.4L1263.59 549.5L1264.09 509.4L1264.59 550.2L1265.09 517.6L1265.59 542.6L1266.09 517.2L1266.59 550.8L1267.09 520.0L1267.59 549.7L1268.09 515.3L1268.59 551.7L1269.09 519.2L1269.59 551.5L1270.09 515.2L1270.59 546.0L1271.09 520.7L1271.59 549.4L1272.09 521.5L1272.59 552.1L1273.09 518.6L1273.59 549.2L1274.09 513.8L1274.59 546.0L1275.09 522.8L1275.59 547.6L1276.09 513.8L1276.59 548.8L1277.09 520.9L1277.59 544.7L1278.09 515.1L1278.59 544.1L1279.09 513.7L1279.59 546.3L1280.09 521.4L1280.59 548.3L1281.09 515.7L1281.59 551.2L1282.09 516.9L1282.59 542.9L1283.09 508.9L1283.59 550.1L1284.09 511.5L1284.59 543.7L1285.09 517.9L1285.59 545.2L1286.09 514.7L1286.59 551.8L1287.09 515.3L1287.59 549.1L1288.09 514.6L1288.59 548.3L1289.09 521.3L1289.59 545.6L1290.09 515.0L1290.59 548.9L1291.09 520.0L1291.59 511.7L1292.09 515.1L1292.59 547.5L1293.09 517.6L1293.59 545.8L1294.09 513.8L1294.59 550.1L1295.09 517.4L1295.59 549.3L1296.09 513.7L1296.59 552.1L1297.09 517.6L1297.59 543.6L1298.09 516.4L1298.59 546.3L1299.09 519.2L1299.59 547.8L1300.09 511.3L1300.59 549.9L1301.09 513.7L1301.59 551.1L1302.09 519.5L1302.59 550.7L1303.09 515.0L1303.59 547.9L1304.09 516.9L1304.59 548.4L1305.09 515.3L1305.59 544.9L1306.09 517.5L1306.59 549.2L1307.09 522.9L1307.59 548.4L1308.09 522.6L1308.59 546.2L1309.09 522.4L1309.59 551.6L1310.09 516.2L1310.59 543.6L1311.09 513.7L1311.59 542.9L1312.09 514.6L1312.59 551.7L1313.09 516.0L1313.59 549.6L1314.09 518.5L1314.59 543.1L1315.09 521.5L1315.59 547.2L1316.09 515.7L1316.59 549.5L1317.09 511.2L1317.59 544.5L1318.09 521.1L1318.59 547.4L1319.09 516.1L1319.59 550.9L1320.09 515.9L1320.59 550.0L1321.09 515.7L1321.59 549.9L1322.09 519.8L1322.59 542.8L1323.09 515.2L1323.59 551.6L1324.09 520.4L1324.59 550.3L1325.09 521.8L1325.59 548.3L1326.09 520.7L1326.59 543.7L1327.09 518.8L1327.59 546.8L1328.09 508.4L1328.59 547.6L1329.09 516.6L1329.59 547.5L1330.09 519.4L1330.59 544.9L1331.09 511.5L1331.59 549.6L1332.09 516.5L1332.59 549.3L1333.09 518.3L1333.59 543.7L1334.09 519.3L1334.59 547.9L1335.09 520.8L1335.59 551.6L1336.09 522.1L1336.59 549.0L1337.09 522.0L1337.59 543.4L1338.09 516.9L1338.59 511.2L1339.09 517.1L1339.59 544.5L1340.09 517.8L1340.59 543.9L1341.09 518.7L1341.59 543.7L1342.09 514.1L1342.59 549.8L1343.09 514.3L1343.59 551.2L1344.09 522.1L1344.59 549.2L1345.09 517.2L1345.59 549.1L1346.09 519.4L1346.59 543.8L1347.09 516.7L1347.59 547.7L1348.09 517.3L1348.59 544.4L1349.09 514.5L1349.59 552.0L1350.09 519.5L1350.59 550.6L1351.09 513.8L1351.59 543.2L1352.09 517.5L1352.59 549.5L1353.09 520.4L1353.59 551.9L1354.09 522.3L1354.59 544.6L1355.09 514.3L1355.59 551.7L1356.09 515.1L1356.59 552.1L1357.09 517.4L1357.59 508.9L1358.09 523.1L1358.59 550.4L1359.09 521.3L1359.59 546.2L1360.09 519.9L1360.59 544.1L1361.09 514.1L1361.59 550.9L1362.09 519.0L1362.59 550.7L1363.09 515.1L1363.59 551.5L1364.09 516.0L1364.59 547.7L1365.09 513.7L1365.59 549.4L1366.09 518.9L1366.59 543.9L1367.09 513.7L1367.59 551.9L1368.09 514.1L1368.59 549.5L1369.09 518.7L1369.59 551.4L1370.09 521.1L1370.59 547.6L1371.09 517.2L1371.59 550.6L1372.09 514.5L1372.59 545.3L1373.09 516.9L1373.59 546.6L1374.09 518.6L1374.59 550.2L1375.09 518.1L1375.59 549.2L1376.09 519.7L1376.59 544.3L1377.09 521.9L1377.59 547.5L1378.09 523.1L1378.59 550.4L1379.09 514.3L1379.59 542.5L1380.09 515.9L1380.59 546.6L1381.09 516.0L1381.59 543.2L1382.09 521.4L1382.59 544.3L1383.09 516.0L1383.59 551.0L1384.09 514.5L1384.59 550.0L1385.09 510.4L1385.59 546.9L1386.09 522.0L1386.59 551.0L1387.09 514.4L1387.59 543.9L1388.09 521.9L1388.59 550.5L1389.09 517.1L1389.59 549.9L1390.09 522.6L1390.59 544.9L1391.09 514.8L1391.59 545.5L1392.09 521.5L1392.59 550.1L1393.09 521.8L1393.59 551.5L1394.09 514.5L1394.59 549.1L1395.09 513.9L1395.59 546.0L1396.09 513.7L1396.59 545.3L1397.09 513.9L1397.59 550.2L1398.09 513.9L1398.59 544.7L1399.09 514.0L1399.59 550.4L1400.09 515.7L1400.59 543.2L1401.09 513.8L1401.59 548.7L1402.09 514.8L1402.59 550.5L1403.09 514.9L1403.59 546.4L1404.09 515.1L1404.59 551.0L1405.09 518.6L1405.59 545.2L1406.09 523.0L1406.59 544.5L1407.09 518.9L1407.59 551.7L1408.09 515.8L1408.59 544.4L1409.09 519.0L1409.59 551.9L1410.09 515.0L1410.59 552.0L1411.09 514.8L1411.59 545.2L1412.09 515.1L1412.59 551.7L1413.09 519.7L1413.59 552.0L1414.09 521.8L1414.59 550.8L1415.09 523.0L1415.59 543.3L1416.09 518.9L1416.59 509.2L1417.09 519.4L1417.59 550.4L1418.09 517.0L1418.59 543.0L1419.09 516.4L1419.59 544.9L1420.09 515.3L1420.59 543.4L1421.09 516.1L1421.59 550.5L1422.09 515.1L1422.59 545.0L1423.09 518.8L1423.59 547.3L1424.09 520.5L1424.59 547.4L1425.09 517.0L1425.59 544.7L1426.09 518.0L1426.59 548.9L1427.09 520.7L1427.59 550.9L1428.09 514.3L1428.59 551.9L1429.09 515.1L1429.59 549.5L1430.09 518.4L1430.59 546.2L1431.09 513.8L1431.59 546.4L1432.09 518.4L1432.59 548.0L1433.09 517.3L1433.59 550.0L1434.09 518.5L1434.59 550.2L1435.09 508.3L1435.59 544.1L1436.09 518.3L1436.59 548.5L1437.09 519.6L1437.59 544.7L1438.09 512.0L1438.59 545.7L1439.09 522.1L1439.59 543.9L1440.09 519.5L1440.59 545.9L1441.09 513.6L1441.59 550.6L1442.09 517.4L1442.59 544.1L1443.09 516.8L1443.59 550.5L1444.09 520.9L1444.59 550.6L1445.09 518.7L1445.59 544.1L1446.09 523.2L1446.59 546.8L1447.09 516.8L1447.59 544.6L1448.09 521.4L1448.59 543.6L1449.09 515.2L1449.59 548.7L1450.09 514.0L1450.59 549.6L1451.09 518.6L1451.59 543.0L1452.09 522.6L1452.59 550.8L1453.09 516.4L1453.59 550.6L1454.09 515.0L1454.59 548.3L1455.09 513.7L1455.59 545.0L1456.09 518.8L1456.59 542.5L1457.09 511.6L1457.59 549.7L1458.09 511.3L1458.59 542.9L1459.09 517.0L1459.59 549.2L1460.09 508.7L1460.59 549.7L1461.09 521.2L1461.59 508.3L1462.09 516.8L1462.59 542.7L1463.09 514.5L1463.59 543.9L1464.09 515.7L1464.59 547.7L1465.09 514.1L1465.59 545.8L1466.09 518.9L1466.59 545.6L1467.09 519.9L1467.59 545.4L1468.09 515.1L1468.59 546.3L1469.09 520.7L1469.59 544.0L1470.09 519.0L1470.59 545.7L1471.09 517.0L1471.59 544.9L1472.09 516.0L1472.59 548.8L1473.09 515.7L1473.59 548.6L1474.09 522.9L1474.59 552.1L1475.09 519.2L1475.59 508.7L1476.09 518.0L1476.59 546.3L1477.09 515.7L1477.59 547.5L1478.09 517.9L1478.59 548.0L1479.09 515.6L1479.59 544.3L1480.09 514.0L1480.59 549.9L1481.09 513.8L1481.59 546.8L1482.09 513.7L1482.59 548.5L1483.09 511.9L1483.59 547.0L1484.09 517.4L1484.59 550.1L1485.09 514.0L1485.59 545.7L1486.09 515.7L1486.59 546.3L1487.09 516.7L1487.59 547.6L1488.09 518.6L1488.59 550.2L1489.09 516.7L1489.59 545.7L1490.09 518.1L1490.59 543.1L1491.09 514.0L1491.59 549.9L1492.09 514.6L1492.59 548.7L1493.09 515.5L1493.59 547.3L1494.09 518.4L1494.59 546.7L1495.09 511.3L1495.59 549.8L1496.09 515.8L1496.59 544.6L1497.09 519.4L1497.59 549.9L1498.09 516.8L1498.59 544.3L1499.09 516.6L1499.59 546.0L1500.09 520.3L1500.59 546.2L1501.09 516.3L1501.50 551.8" stroke="#3a5a9e" stroke-width="1.9" fill="none" stroke-linejoin="round"/><path d="M1010.2 527.4L1011.2 527.4L1012.2 527.4L1013.2 527.3L1014.2 527.2L1015.2 527.2L1016.2 527.0L1017.2 527.0L1018.2 526.9L1019.2 526.8L1020.2 526.7L1021.2 526.5L1022.2 526.4L1023.2 526.1L1024.2 526.0L1025.2 525.9L1026.2 525.9L1027.2 525.5L1028.2 525.4L1029.2 525.3L1030.2 525.0L1031.2 524.9L1032.2 524.7L1033.2 524.7L1034.2 524.2L1035.2 524.1L1036.2 523.7L1037.2 523.9L1038.2 523.5L1039.2 523.3L1040.2 523.3L1041.2 522.9L1042.2 522.5L1043.2 522.6L1044.2 522.0L1045.2 521.9L1046.2 521.3L1047.2 521.5L1048.2 521.1L1049.2 520.4L1050.2 520.6L1051.2 520.6L1052.2 520.2L1053.2 520.0L1054.2 519.1L1055.2 519.0L1056.2 519.2L1057.2 518.5L1058.2 518.2L1059.2 517.7L1060.2 518.0L1061.2 517.4L1062.2 516.5L1063.2 516.0L1064.2 516.0L1065.2 515.7L1066.2 515.3L1067.2 515.2L1068.2 514.2L1069.2 513.7L1070.2 513.8L1071.2 512.9L1072.2 513.5L1073.2 513.2L1074.2 511.6L1075.2 512.3L1076.2 512.1L1077.2 512.1L1078.2 512.4L1079.2 511.1L1080.2 511.9L1081.2 512.0L1082.2 512.5L1083.2 511.4L1084.2 511.5L1085.2 512.1L1086.2 512.5L1087.2 512.3L1088.2 511.3L1089.2 511.9L1090.2 511.1L1091.2 511.2L1092.2 511.6L1093.2 511.7L1094.2 512.4L1095.2 512.0L1096.2 512.0L1097.2 512.1L1098.2 511.2L1099.2 512.2L1100.2 510.8L1101.2 512.2L1102.2 510.9L1103.2 512.1L1104.2 511.8L1105.2 511.4L1106.2 511.4L1107.2 511.2L1108.2 511.6L1109.2 511.1L1110.2 511.2L1111.2 511.6L1112.2 510.7L1113.2 511.6L1114.2 512.1L1115.2 511.4L1116.2 510.7L1117.2 512.0L1118.2 510.8L1119.2 511.7L1120.2 510.6L1121.2 511.2L1122.2 510.7L1123.2 511.2L1124.2 511.8L1125.2 511.8L1126.2 511.4L1127.2 511.5L1128.2 510.9L1129.2 510.8L1130.2 511.6L1131.2 511.0L1132.2 510.7L1133.2 511.8L1134.2 510.9L1135.2 510.9L1136.2 511.6L1137.2 510.7L1138.2 511.5L1139.2 510.7L1140.2 510.7L1141.2 511.1L1142.2 511.4L1143.2 510.8L1144.2 511.0L1145.2 512.1L1146.2 510.9L1147.2 512.2L1148.2 511.8L1149.2 511.5L1150.2 512.1L1151.2 511.7L1152.2 511.9L1153.2 511.1L1154.2 510.9L1155.2 511.6L1156.2 511.5L1157.2 510.7L1158.2 510.0L1159.2 509.4L1160.2 510.4L1161.2 509.8L1162.2 508.4L1163.2 508.6L1164.2 509.0L1165.2 507.6L1166.2 507.8L1167.2 506.7L1168.2 506.4L1169.2 506.8L1170.2 506.1L1171.2 506.2L1172.2 505.6L1173.2 505.6L1174.2 504.1L1175.2 504.4L1176.2 503.5L1177.2 503.6L1178.2 503.0L1179.2 501.8L1180.2 501.8L1181.2 500.9L1182.2 500.4L1183.2 500.3L1184.2 499.7L1185.2 498.1L1186.2 497.7L1187.2 497.3L1188.2 495.6L1189.2 494.5L1190.2 494.5L1191.2 493.2L1192.2 492.1L1193.2 491.6L1194.2 489.4L1195.2 488.1L1196.2 487.7L1197.2 486.5L1198.2 484.6L1199.2 483.6L1200.2 482.8L1201.2 480.7L1202.2 478.5L1203.2 475.2L1204.2 473.0L1205.2 469.2L1206.2 465.8L1207.2 461.9L1208.2 463.8L1209.2 467.9L1210.2 470.4L1211.2 473.6L1212.2 477.9L1213.2 480.3L1214.2 481.8L1215.2 483.1L1216.2 485.0L1217.2 487.2L1218.2 488.7L1219.2 490.0L1220.2 491.2L1221.2 493.4L1222.2 494.1L1223.2 495.4L1224.2 496.5L1225.2 498.3L1226.2 499.1L1227.2 500.8L1228.2 501.3L1229.2 502.8L1230.2 503.5L1231.2 504.1L1232.2 505.2L1233.2 505.2L1234.2 505.5L1235.2 507.1L1236.2 507.9L1237.2 508.4L1238.2 509.1L1239.2 510.3L1240.2 511.1L1241.2 511.5L1242.2 512.2L1243.2 511.8L1244.2 512.6L1245.2 512.8L1246.2 512.4L1247.2 513.9L1248.2 513.7L1249.2 514.3L1250.2 513.9L1251.2 514.6L1252.2 514.2L1253.2 514.3L1254.2 515.0L1255.2 515.3L1256.2 515.4L1257.2 514.9L1258.2 515.2L1259.2 514.1L1260.2 514.3L1261.2 514.0L1262.2 514.7L1263.2 515.1L1264.2 515.3L1265.2 515.3L1266.2 514.5L1267.2 515.3L1268.2 514.6L1269.2 514.9L1270.2 514.8L1271.2 515.1L1272.2 514.3L1273.2 515.2L1274.2 514.1L1275.2 515.3L1276.2 514.3L1277.2 513.9L1278.2 515.0L1279.2 515.1L1280.2 514.1L1281.2 514.5L1282.2 514.4L1283.2 515.2L1284.2 513.9L1285.2 515.4L1286.2 514.8L1287.2 515.1L1288.2 514.8L1289.2 515.1L1290.2 514.1L1291.2 515.2L1292.2 514.3L1293.2 514.8L1294.2 514.1L1295.2 514.7L1296.2 514.7L1297.2 514.2L1298.2 514.0L1299.2 514.8L1300.2 513.9L1301.2 514.2L1302.2 515.3L1303.2 515.3L1304.2 515.0L1305.2 514.2L1306.2 514.0L1307.2 514.2L1308.2 514.1L1309.2 514.1L1310.2 514.1L1311.2 514.2L1312.2 514.0L1313.2 514.3L1314.2 515.0L1315.2 514.7L1316.2 514.5L1317.2 514.9L1318.2 514.3L1319.2 515.3L1320.2 514.4L1321.2 514.5L1322.2 514.7L1323.2 514.3L1324.2 514.3L1325.2 514.6L1326.2 515.0L1327.2 514.4L1328.2 514.3L1329.2 514.4L1330.2 514.6L1331.2 514.2L1332.2 515.3L1333.2 514.1L1334.2 514.4L1335.2 514.0L1336.2 515.3L1337.2 514.8L1338.2 515.4L1339.2 515.3L1340.2 514.9L1341.2 514.1L1342.2 514.0L1343.2 515.4L1344.2 514.1L1345.2 514.6L1346.2 514.2L1347.2 514.9L1348.2 514.0L1349.2 514.3L1350.2 514.8L1351.2 515.2L1352.2 514.3L1353.2 515.2L1354.2 514.1L1355.2 514.6L1356.2 514.8L1357.2 514.4L1358.2 514.2L1359.2 514.9L1360.2 515.1L1361.2 514.3L1362.2 514.7L1363.2 514.1L1364.2 515.2L1365.2 514.5L1366.2 515.4L1367.2 515.1L1368.2 515.0L1369.2 514.1L1370.2 515.1L1371.2 514.1L1372.2 514.9L1373.2 514.0L1374.2 514.3L1375.2 514.4L1376.2 515.1L1377.2 514.5L1378.2 514.4L1379.2 514.3L1380.2 514.3L1381.2 515.3L1382.2 513.9L1383.2 514.2L1384.2 514.7L1385.2 514.4L1386.2 514.8L1387.2 514.3L1388.2 514.5L1389.2 514.8L1390.2 514.5L1391.2 515.1L1392.2 514.4L1393.2 514.0L1394.2 514.5L1395.2 515.2L1396.2 515.4L1397.2 514.1L1398.2 515.1L1399.2 514.7L1400.2 514.2L1401.2 514.3L1402.2 514.3L1403.2 515.2L1404.2 514.8L1405.2 514.0L1406.2 514.4L1407.2 514.4L1408.2 514.9L1409.2 514.0L1410.2 514.1L1411.2 514.2L1412.2 514.6L1413.2 514.4L1414.2 514.9L1415.2 515.4L1416.2 515.3L1417.2 514.0L1418.2 515.3L1419.2 515.2L1420.2 514.0L1421.2 514.4L1422.2 515.0L1423.2 515.3L1424.2 514.4L1425.2 514.3L1426.2 514.5L1427.2 514.2L1428.2 515.2L1429.2 514.5L1430.2 515.3L1431.2 515.4L1432.2 514.8L1433.2 514.3L1434.2 514.8L1435.2 515.0L1436.2 514.1L1437.2 514.8L1438.2 514.4L1439.2 514.9L1440.2 515.3L1441.2 514.4L1442.2 515.0L1443.2 515.3L1444.2 514.9L1445.2 515.3L1446.2 515.4L1447.2 513.9L1448.2 514.8L1449.2 514.0L1450.2 514.8L1451.2 515.0L1452.2 515.2L1453.2 514.6L1454.2 514.2L1455.2 514.4L1456.2 514.2L1457.2 514.0L1458.2 514.7L1459.2 514.4L1460.2 514.1L1461.2 514.2L1462.2 515.0L1463.2 514.9L1464.2 514.6L1465.2 514.5L1466.2 514.4L1467.2 514.3L1468.2 514.4L1469.2 515.2L1470.2 514.4L1471.2 515.1L1472.2 514.9L1473.2 514.5L1474.2 514.8L1475.2 514.4L1476.2 515.3L1477.2 514.0L1478.2 515.3L1479.2 514.9L1480.2 514.7L1481.2 514.9L1482.2 514.9L1483.2 514.0L1484.2 514.3L1485.2 514.2L1486.2 514.5L1487.2 514.6L1488.2 515.0L1489.2 514.8L1490.2 514.6L1491.2 514.8L1492.2 514.7L1493.2 515.2L1494.2 514.9L1495.2 514.3L1496.2 514.4L1497.2 514.3L1498.2 514.9L1499.2 514.2L1500.2 515.1L1501.2 514.6L1501.2 545.9L1500.2 546.3L1499.2 549.3L1498.2 549.4L1497.2 549.8L1496.2 548.2L1495.2 545.9L1494.2 545.1L1493.2 549.3L1492.2 548.9L1491.2 549.5L1490.2 549.7L1489.2 549.7L1488.2 544.1L1487.2 546.2L1486.2 544.3L1485.2 546.2L1484.2 548.8L1483.2 548.7L1482.2 548.2L1481.2 547.5L1480.2 549.1L1479.2 549.7L1478.2 549.6L1477.2 546.3L1476.2 548.9L1475.2 546.2L1474.2 548.5L1473.2 548.9L1472.2 545.1L1471.2 548.3L1470.2 545.5L1469.2 546.1L1468.2 544.6L1467.2 548.4L1466.2 544.3L1465.2 546.6L1464.2 547.8L1463.2 546.7L1462.2 547.0L1461.2 548.9L1460.2 546.7L1459.2 548.2L1458.2 549.3L1457.2 544.0L1456.2 546.7L1455.2 547.5L1454.2 547.9L1453.2 547.5L1452.2 544.8L1451.2 546.7L1450.2 547.2L1449.2 548.6L1448.2 547.0L1447.2 548.6L1446.2 549.5L1445.2 545.4L1444.2 545.2L1443.2 548.2L1442.2 548.7L1441.2 543.9L1440.2 544.3L1439.2 543.7L1438.2 546.5L1437.2 547.1L1436.2 548.3L1435.2 543.4L1434.2 546.9L1433.2 546.6L1432.2 548.1L1431.2 549.8L1430.2 548.8L1429.2 544.6L1428.2 546.0L1427.2 548.5L1426.2 546.7L1425.2 545.1L1424.2 545.2L1423.2 546.7L1422.2 549.4L1421.2 546.8L1420.2 547.5L1419.2 545.2L1418.2 547.1L1417.2 549.3L1416.2 549.9L1415.2 547.0L1414.2 549.6L1413.2 546.6L1412.2 547.8L1411.2 547.8L1410.2 547.9L1409.2 546.9L1408.2 549.3L1407.2 545.6L1406.2 543.5L1405.2 543.4L1404.2 549.2L1403.2 546.4L1402.2 547.0L1401.2 547.6L1400.2 549.1L1399.2 543.2L1398.2 549.4L1397.2 546.5L1396.2 543.9L1395.2 545.5L1394.2 547.2L1393.2 544.4L1392.2 543.5L1391.2 545.5L1390.2 545.1L1389.2 546.4L1388.2 547.9L1387.2 547.1L1386.2 546.8L1385.2 546.9L1384.2 545.7L1383.2 547.6L1382.2 543.4L1381.2 546.0L1380.2 545.4L1379.2 546.0L1378.2 549.0L1377.2 549.0L1376.2 547.9L1375.2 549.4L1374.2 543.1L1373.2 545.7L1372.2 544.3L1371.2 549.2L1370.2 543.4L1369.2 545.2L1368.2 546.6L1367.2 543.9L1366.2 546.0L1365.2 545.4L1364.2 546.0L1363.2 544.4L1362.2 548.0L1361.2 543.2L1360.2 547.3L1359.2 544.4L1358.2 546.1L1357.2 543.2L1356.2 545.7L1355.2 543.3L1354.2 548.6L1353.2 543.9L1352.2 544.7L1351.2 547.3L1350.2 547.1L1349.2 546.2L1348.2 547.8L1347.2 544.5L1346.2 549.3L1345.2 547.3L1344.2 549.1L1343.2 545.8L1342.2 543.6L1341.2 548.2L1340.2 545.1L1339.2 545.2L1338.2 545.4L1337.2 546.9L1336.2 543.9L1335.2 545.7L1334.2 548.4L1333.2 544.5L1332.2 548.1L1331.2 544.3L1330.2 544.3L1329.2 547.1L1328.2 544.2L1327.2 547.1L1326.2 549.4L1325.2 548.1L1324.2 547.7L1323.2 544.6L1322.2 547.7L1321.2 547.2L1320.2 549.8L1319.2 549.1L1318.2 549.8L1317.2 545.9L1316.2 549.8L1315.2 548.8L1314.2 548.1L1313.2 543.4L1312.2 544.1L1311.2 543.2L1310.2 547.7L1309.2 543.7L1308.2 543.5L1307.2 548.5L1306.2 545.4L1305.2 543.3L1304.2 544.1L1303.2 547.1L1302.2 543.3L1301.2 547.1L1300.2 544.0L1299.2 547.2L1298.2 547.6L1297.2 543.2L1296.2 548.1L1295.2 549.2L1294.2 546.3L1293.2 544.7L1292.2 548.9L1291.2 547.9L1290.2 545.9L1289.2 548.5L1288.2 548.2L1287.2 546.1L1286.2 547.5L1285.2 546.1L1284.2 549.5L1283.2 544.7L1282.2 546.6L1281.2 548.7L1280.2 545.2L1279.2 543.7L1278.2 547.5L1277.2 547.2L1276.2 545.6L1275.2 543.5L1274.2 549.6L1273.2 545.0L1272.2 543.7L1271.2 547.2L1270.2 546.5L1269.2 545.2L1268.2 545.2L1267.2 547.1L1266.2 548.2L1265.2 544.7L1264.2 543.9L1263.2 549.9L1262.2 544.8L1261.2 545.5L1260.2 549.5L1259.2 544.4L1258.2 548.6L1257.2 545.4L1256.2 549.9L1255.2 543.4L1254.2 548.9L1253.2 546.3L1252.2 544.1L1251.2 544.0L1250.2 546.4L1249.2 549.3L1248.2 546.4L1247.2 543.9L1246.2 546.8L1245.2 549.8L1244.2 543.3L1243.2 547.4L1242.2 543.2L1241.2 544.2L1240.2 544.5L1239.2 547.4L1238.2 547.5L1237.2 544.9L1236.2 546.4L1235.2 543.7L1234.2 549.3L1233.2 545.2L1232.2 544.0L1231.2 545.3L1230.2 547.7L1229.2 548.3L1228.2 548.7L1227.2 549.7L1226.2 543.2L1225.2 538.5L1224.2 534.6L1223.2 533.4L1222.2 533.4L1221.2 525.2L1220.2 526.4L1219.2 520.0L1218.2 514.9L1217.2 517.3L1216.2 510.2L1215.2 507.1L1214.2 502.5L1213.2 501.6L1212.2 497.9L1211.2 492.6L1210.2 488.9L1209.2 485.6L1208.2 476.4L1207.2 477.0L1206.2 477.3L1205.2 479.4L1204.2 486.9L1203.2 488.0L1202.2 492.7L1201.2 490.3L1200.2 494.0L1199.2 498.2L1198.2 500.7L1197.2 499.6L1196.2 506.1L1195.2 504.9L1194.2 504.6L1193.2 508.2L1192.2 505.8L1191.2 510.1L1190.2 512.7L1189.2 516.2L1188.2 511.4L1187.2 513.3L1186.2 517.1L1185.2 516.2L1184.2 516.6L1183.2 522.3L1182.2 522.7L1181.2 524.2L1180.2 523.4L1179.2 522.9L1178.2 527.8L1177.2 523.4L1176.2 523.6L1175.2 525.8L1174.2 528.4L1173.2 531.7L1172.2 533.6L1171.2 529.9L1170.2 530.9L1169.2 529.5L1168.2 535.3L1167.2 535.2L1166.2 538.4L1165.2 535.5L1164.2 535.1L1163.2 536.6L1162.2 537.7L1161.2 536.7L1160.2 541.9L1159.2 537.2L1158.2 540.0L1157.2 540.0L1156.2 540.4L1155.2 540.5L1154.2 541.1L1153.2 546.4L1152.2 544.0L1151.2 543.5L1150.2 544.4L1149.2 547.9L1148.2 547.4L1147.2 544.5L1146.2 545.4L1145.2 547.4L1144.2 548.7L1143.2 549.1L1142.2 549.6L1141.2 546.5L1140.2 549.0L1139.2 548.5L1138.2 544.3L1137.2 548.5L1136.2 544.2L1135.2 543.1L1134.2 543.9L1133.2 548.1L1132.2 548.3L1131.2 543.7L1130.2 547.7L1129.2 547.3L1128.2 544.0L1127.2 548.3L1126.2 547.0L1125.2 545.8L1124.2 547.4L1123.2 549.3L1122.2 545.5L1121.2 549.8L1120.2 549.7L1119.2 545.8L1118.2 546.0L1117.2 546.5L1116.2 548.4L1115.2 543.7L1114.2 544.5L1113.2 548.0L1112.2 547.6L1111.2 546.3L1110.2 549.2L1109.2 543.9L1108.2 548.1L1107.2 549.9L1106.2 546.2L1105.2 544.9L1104.2 545.1L1103.2 547.3L1102.2 549.3L1101.2 549.9L1100.2 548.7L1099.2 547.8L1098.2 545.6L1097.2 546.6L1096.2 544.8L1095.2 548.3L1094.2 547.5L1093.2 547.0L1092.2 543.8L1091.2 546.6L1090.2 544.2L1089.2 547.8L1088.2 546.7L1087.2 544.5L1086.2 549.0L1085.2 545.2L1084.2 549.2L1083.2 546.2L1082.2 547.2L1081.2 548.0L1080.2 543.5L1079.2 548.1L1078.2 547.0L1077.2 546.2L1076.2 543.2L1075.2 546.3L1074.2 547.0L1073.2 544.5L1072.2 546.7L1071.2 546.0L1070.2 543.1L1069.2 544.8L1068.2 544.4L1067.2 544.9L1066.2 543.6L1065.2 543.1L1064.2 542.9L1063.2 539.6L1062.2 539.6L1061.2 542.8L1060.2 540.1L1059.2 541.0L1058.2 541.2L1057.2 541.5L1056.2 538.8L1055.2 538.1L1054.2 536.8L1053.2 536.5L1052.2 537.0L1051.2 538.6L1050.2 537.3L1049.2 536.7L1048.2 537.1L1047.2 535.4L1046.2 535.5L1045.2 535.8L1044.2 535.6L1043.2 536.1L1042.2 535.3L1041.2 533.8L1040.2 534.7L1039.2 534.6L1038.2 534.2L1037.2 534.1L1036.2 532.0L1035.2 531.8L1034.2 531.8L1033.2 531.9L1032.2 531.9L1031.2 531.9L1030.2 530.4L1029.2 530.2L1028.2 530.4L1027.2 530.1L1026.2 530.0L1025.2 530.4L1024.2 529.8L1023.2 529.5L1022.2 529.7L1021.2 529.2L1020.2 528.9L1019.2 529.0L1018.2 528.7L1017.2 528.3L1016.2 528.4L1015.2 528.1L1014.2 527.9L1013.2 527.8L1012.2 527.6L1011.2 527.5L1010.2 527.4Z" fill="#3a5a9e"/><path d="M1206.14 483.8V81.5H1208.74V483.8ZM1274.36 524.8V408.7H1276.76V524.8ZM1313.95 524.8V468.8H1316.35V524.8ZM1341.72 524.8V438.8H1344.12V524.8ZM1382.22 524.8V462.0H1384.62V524.8ZM1410.98 524.8V494.8H1413.38V524.8ZM1432.19 524.8V494.8H1434.59V524.8ZM1450.49 524.8V503.0H1452.89V524.8ZM1466.24 524.8V505.7H1468.64V524.8Z" fill="#3a5a9e"/></g><g clip-path="url(#cf)" opacity="0.86"><path d="M821.50 523.8L823.80 508.0L826.09 525.0L828.36 513.4L830.63 518.7L832.88 515.9L835.12 517.1L837.35 509.4L839.57 524.1L841.78 518.1L843.97 512.3L846.16 517.2L848.33 515.2L850.49 527.4L852.64 511.3L854.78 506.9L856.91 520.6L859.02 530.6L861.13 514.6L863.23 530.9L865.31 518.5L867.38 522.2L869.45 524.6L871.50 518.1L873.54 532.4L875.57 526.7L877.59 511.6L879.60 520.1L881.60 511.7L883.59 532.8L885.57 519.0L887.54 525.3L889.50 520.4L891.45 532.7L893.39 519.9L895.32 530.3L897.23 510.5L899.14 510.0L901.04 533.3L902.93 515.8L904.81 534.1L906.68 512.4L908.54 534.2L910.39 520.4L912.23 515.3L914.06 527.1L915.88 517.0L917.70 535.7L919.50 518.8L921.29 526.4L923.08 513.4L924.85 529.3L926.62 516.3L928.37 533.8L930.12 515.5L931.86 512.2L933.59 508.8L935.31 518.9L937.02 526.1L938.73 516.8L940.42 533.4L942.11 517.4L943.78 528.4L945.45 511.1L947.11 529.8L948.76 520.1L950.41 534.3L952.04 514.6L953.66 537.1L955.28 515.5L956.89 533.1L958.49 511.2L960.08 527.2L961.67 515.7L963.24 537.0L964.81 513.2L966.37 530.6L967.92 531.1L969.47 512.2L971.00 538.8L972.53 514.2L974.05 539.3L975.56 530.0L977.06 530.0L978.56 518.4L980.05 534.1L981.53 531.5L983.00 512.2L984.47 529.8L985.93 514.2L987.38 533.3L988.82 515.5L990.26 539.7L991.68 520.8L993.10 540.1L994.52 512.1L995.92 536.0L997.32 532.2L998.71 515.1L1000.10 538.6L1001.48 512.9L1002.85 535.3L1004.21 507.8L1005.56 537.9L1006.91 507.8L1008.26 541.4L1009.59 514.0L1010.92 534.3L1012.24 516.1L1013.55 541.1L1014.86 515.8L1016.16 534.2L1017.46 514.6L1018.75 537.1L1020.03 509.4L1021.30 541.2L1022.57 515.2L1023.83 538.6L1025.08 517.6L1026.33 543.0L1027.57 506.7L1028.81 511.8L1030.04 543.5L1031.26 513.8L1032.48 546.1L1033.69 512.9L1034.89 538.0L1036.09 517.3L1037.28 545.7L1038.46 517.2L1039.64 543.8L1040.82 517.0L1041.98 544.6L1043.14 514.7L1044.30 540.1L1045.45 519.8L1046.59 547.8L1047.73 518.3L1048.86 543.4L1049.98 518.5L1051.10 547.8L1052.22 516.2L1053.33 546.9L1054.43 519.3L1055.52 547.8L1056.61 513.0L1057.70 540.5L1058.78 517.9L1059.85 543.7L1060.92 512.3L1061.99 546.6L1063.04 518.5L1064.09 541.4L1065.14 512.2L1066.18 550.3L1067.22 513.4L1068.25 544.5L1069.27 515.2L1070.29 550.3L1071.31 515.6L1072.32 509.5L1073.32 519.3L1074.32 542.3L1075.31 512.2L1076.30 544.2L1077.29 510.9L1078.27 543.0L1079.24 519.7L1080.21 548.2L1081.17 515.7L1082.13 551.9L1083.08 516.6L1084.03 544.1L1084.97 514.0L1085.91 546.2L1086.85 516.0L1087.78 551.4L1088.70 516.8L1089.62 548.2L1090.53 515.9L1091.44 549.8L1092.35 520.1L1093.25 542.6L1094.15 510.7L1095.04 550.8L1095.92 520.4L1096.81 541.9L1097.68 518.8L1098.56 508.3L1099.43 515.6L1100.29 543.9L1101.15 517.3L1102.00 551.7L1102.85 506.9L1103.70 548.2L1104.54 512.5L1105.38 550.9L1106.21 520.1L1107.04 550.7L1107.87 510.7L1108.69 547.8L1109.50 511.3L1110.32 550.9L1111.12 509.0L1111.93 548.3L1112.73 510.7L1113.52 546.8L1114.31 510.9L1115.10 546.9L1115.88 515.3L1116.66 551.2L1117.44 505.5L1118.21 545.1L1118.98 513.4L1119.74 543.6L1120.50 511.9L1121.25 547.2L1122.00 514.7L1122.75 545.2L1123.50 510.7L1124.24 542.0L1124.97 518.9L1125.70 545.3L1126.43 512.8L1127.16 550.5L1127.88 510.7L1128.59 546.1L1129.31 507.9L1130.02 551.0L1130.72 513.0L1131.43 546.4L1132.12 514.1L1132.82 546.3L1133.51 519.4L1134.20 550.4L1134.88 511.6L1135.56 550.4L1136.24 507.7L1136.91 544.5L1137.59 517.8L1138.25 542.7L1138.92 512.3L1139.58 551.3L1140.23 511.0L1140.89 546.7L1141.54 510.6L1142.18 548.4L1142.82 510.7L1143.46 549.8L1144.10 512.1L1144.73 548.1L1145.36 510.6L1145.99 546.7L1146.61 512.2L1147.23 542.8L1147.85 511.8L1148.47 547.4L1149.08 512.8L1149.68 547.8L1150.29 515.3L1150.89 549.4L1151.49 511.0L1152.08 547.1L1152.67 511.8L1153.26 544.8L1153.85 513.8L1154.43 543.1L1155.01 511.5L1155.59 545.2L1156.16 514.6L1156.73 541.7L1157.30 511.9L1157.87 541.0L1158.43 511.9L1158.99 546.1L1159.54 511.3L1160.10 536.4L1160.65 511.2L1161.20 541.3L1161.74 510.8L1162.28 540.3L1162.82 511.4L1163.36 534.7L1163.89 511.0L1164.42 536.6L1164.95 512.1L1165.48 535.3L1166.00 508.4L1166.52 532.5L1167.04 508.1L1167.55 503.9L1168.06 513.6L1168.57 532.8L1169.08 512.3L1169.58 537.8L1170.09 505.2L1170.59 531.5L1171.09 506.1L1171.59 530.7L1172.09 507.8L1172.59 528.9L1173.09 504.2L1173.59 532.4L1174.09 508.1L1174.59 531.1L1175.09 507.8L1175.59 532.7L1176.09 506.2L1176.59 499.7L1177.09 505.1L1177.59 530.1L1178.09 504.1L1178.59 524.3L1179.09 507.9L1179.59 523.1L1180.09 505.0L1180.59 527.2L1181.09 502.7L1181.59 522.0L1182.09 504.2L1182.59 525.7L1183.09 500.2L1183.59 523.2L1184.09 502.0L1184.59 520.4L1185.09 501.7L1185.59 492.5L1186.09 502.8L1186.59 516.8L1187.09 498.8L1187.59 519.5L1188.09 496.2L1188.59 513.1L1189.09 496.1L1189.59 515.4L1190.09 495.8L1190.59 513.5L1191.09 492.9L1191.59 513.8L1192.09 492.5L1192.59 512.3L1193.09 495.4L1193.59 508.0L1194.09 493.1L1194.59 507.8L1195.09 488.2L1195.59 505.0L1196.09 489.9L1196.59 504.0L1197.09 489.3L1197.59 505.8L1198.09 483.9L1198.59 503.7L1199.09 484.2L1199.59 501.4L1200.09 481.4L1200.59 499.4L1201.09 482.4L1201.59 494.6L1202.09 479.7L1202.59 494.0L1203.09 475.0L1203.59 488.6L1204.09 473.3L1204.59 485.5L1205.09 468.6L1205.59 486.1L1206.09 468.0L1206.59 478.9L1207.09 462.1L1207.59 478.1L1208.09 463.0L1208.59 482.5L1209.09 471.3L1209.59 487.3L1210.09 471.4L1210.59 493.9L1211.09 476.3L1211.59 499.1L1212.09 481.3L1212.59 500.1L1213.09 483.6L1213.59 503.1L1214.09 481.1L1214.59 510.3L1215.09 482.6L1215.59 509.9L1216.09 486.6L1216.59 479.9L1217.09 490.1L1217.59 517.0L1218.09 488.4L1218.59 522.3L1219.09 489.2L1219.59 521.6L1220.09 494.0L1220.59 524.0L1221.09 496.2L1221.59 528.6L1222.09 500.5L1222.59 536.1L1223.09 501.2L1223.59 539.4L1224.09 503.8L1224.59 536.7L1225.09 500.7L1225.59 536.4L1226.09 510.8L1226.59 543.3L1227.09 507.9L1227.59 541.9L1228.09 511.5L1228.59 541.3L1229.09 496.0L1229.59 542.0L1230.09 509.2L1230.59 549.3L1231.09 505.1L1231.59 550.5L1232.09 506.8L1232.59 546.9L1233.09 515.3L1233.59 540.5L1234.09 509.2L1234.59 547.2L1235.09 509.0L1235.59 550.5L1236.09 506.6L1236.59 541.1L1237.09 507.8L1237.59 550.8L1238.09 508.5L1238.59 541.6L1239.09 514.2L1239.59 542.5L1240.09 510.1L1240.59 544.5L1241.09 510.6L1241.59 542.8L1242.09 505.0L1242.59 542.4L1243.09 514.2L1243.59 545.0L1244.09 518.7L1244.59 544.8L1245.09 514.3L1245.59 551.4L1246.09 515.2L1246.59 548.5L1247.09 519.6L1247.59 545.3L1248.09 512.9L1248.59 549.5L1249.09 521.1L1249.59 550.4L1250.09 520.0L1250.59 551.1L1251.09 515.3L1251.59 545.7L1252.09 518.4L1252.59 547.0L1253.09 515.6L1253.59 550.7L1254.09 519.8L1254.59 549.9L1255.09 516.6L1255.59 512.2L1256.09 518.2L1256.59 542.6L1257.09 518.5L1257.59 551.7L1258.09 511.3L1258.59 551.0L1259.09 522.4L1259.59 545.7L1260.09 515.3L1260.59 550.5L1261.09 516.9L1261.59 550.0L1262.09 522.2L1262.59 543.4L1263.09 515.3L1263.59 551.8L1264.09 520.3L1264.59 544.0L1265.09 516.9L1265.59 552.1L1266.09 519.6L1266.59 546.6L1267.09 518.3L1267.59 548.4L1268.09 517.4L1268.59 543.6L1269.09 519.1L1269.59 548.1L1270.09 514.0L1270.59 542.9L1271.09 519.4L1271.59 550.7L1272.09 509.0L1272.59 548.5L1273.09 521.3L1273.59 546.8L1274.09 520.6L1274.59 547.8L1275.09 519.5L1275.59 552.1L1276.09 518.7L1276.59 546.3L1277.09 516.1L1277.59 551.8L1278.09 515.2L1278.59 543.8L1279.09 518.0L1279.59 548.3L1280.09 522.3L1280.59 547.6L1281.09 516.8L1281.59 548.5L1282.09 515.2L1282.59 550.8L1283.09 515.4L1283.59 511.6L1284.09 522.1L1284.59 543.2L1285.09 509.8L1285.59 544.5L1286.09 514.2L1286.59 544.6L1287.09 516.3L1287.59 547.6L1288.09 517.4L1288.59 545.8L1289.09 518.1L1289.59 551.7L1290.09 515.8L1290.59 550.8L1291.09 513.9L1291.59 543.5L1292.09 519.2L1292.59 508.2L1293.09 513.9L1293.59 551.6L1294.09 516.3L1294.59 548.8L1295.09 514.4L1295.59 546.0L1296.09 520.6L1296.59 545.1L1297.09 513.8L1297.59 550.5L1298.09 514.2L1298.59 551.9L1299.09 516.3L1299.59 544.3L1300.09 519.7L1300.59 549.6L1301.09 510.3L1301.59 544.6L1302.09 517.5L1302.59 545.5L1303.09 516.7L1303.59 508.6L1304.09 522.1L1304.59 549.9L1305.09 521.7L1305.59 542.7L1306.09 519.7L1306.59 544.3L1307.09 513.7L1307.59 550.8L1308.09 520.8L1308.59 552.0L1309.09 517.4L1309.59 551.1L1310.09 516.8L1310.59 508.5L1311.09 521.7L1311.59 510.6L1312.09 517.6L1312.59 551.7L1313.09 519.8L1313.59 549.5L1314.09 518.3L1314.59 548.4L1315.09 519.6L1315.59 548.4L1316.09 517.9L1316.59 550.2L1317.09 520.9L1317.59 549.1L1318.09 516.4L1318.59 542.7L1319.09 513.6L1319.59 545.4L1320.09 515.6L1320.59 549.9L1321.09 522.5L1321.59 551.2L1322.09 518.5L1322.59 542.6L1323.09 520.6L1323.59 543.8L1324.09 518.1L1324.59 544.3L1325.09 517.9L1325.59 550.2L1326.09 516.0L1326.59 548.7L1327.09 519.2L1327.59 547.2L1328.09 515.0L1328.59 550.7L1329.09 513.8L1329.59 551.9L1330.09 516.3L1330.59 545.2L1331.09 521.3L1331.59 550.3L1332.09 514.1L1332.59 546.0L1333.09 516.8L1333.59 546.9L1334.09 514.4L1334.59 550.7L1335.09 515.5L1335.59 545.7L1336.09 517.8L1336.59 548.9L1337.09 518.7L1337.59 546.2L1338.09 519.3L1338.59 546.9L1339.09 514.9L1339.59 546.5L1340.09 518.0L1340.59 509.5L1341.09 518.7L1341.59 543.5L1342.09 520.2L1342.59 551.6L1343.09 519.3L1343.59 549.6L1344.09 514.3L1344.59 551.5L1345.09 516.8L1345.59 548.1L1346.09 519.2L1346.59 552.0L1347.09 519.8L1347.59 551.5L1348.09 519.4L1348.59 552.0L1349.09 518.0L1349.59 543.5L1350.09 514.1L1350.59 545.4L1351.09 518.9L1351.59 550.6L1352.09 517.6L1352.59 550.2L1353.09 520.2L1353.59 550.2L1354.09 513.8L1354.59 510.3L1355.09 509.1L1355.59 549.6L1356.09 515.1L1356.59 548.8L1357.09 515.6L1357.59 546.0L1358.09 513.8L1358.59 548.3L1359.09 514.5L1359.59 549.8L1360.09 517.7L1360.59 549.8L1361.09 516.9L1361.59 543.8L1362.09 519.0L1362.59 549.0L1363.09 510.0L1363.59 548.7L1364.09 514.9L1364.59 547.2L1365.09 514.8L1365.59 551.6L1366.09 515.7L1366.59 545.2L1367.09 514.4L1367.59 545.9L1368.09 515.0L1368.59 543.1L1369.09 516.4L1369.59 548.3L1370.09 513.8L1370.59 547.7L1371.09 514.2L1371.59 542.7L1372.09 519.2L1372.59 551.3L1373.09 520.2L1373.59 544.9L1374.09 520.8L1374.59 549.8L1375.09 521.0L1375.59 549.1L1376.09 514.5L1376.59 550.8L1377.09 521.5L1377.59 548.6L1378.09 515.3L1378.59 543.2L1379.09 518.3L1379.59 543.3L1380.09 516.4L1380.59 549.4L1381.09 513.6L1381.59 548.3L1382.09 519.5L1382.59 549.5L1383.09 513.6L1383.59 547.3L1384.09 517.4L1384.59 544.8L1385.09 522.1L1385.59 549.9L1386.09 515.2L1386.59 545.2L1387.09 518.2L1387.59 547.2L1388.09 520.0L1388.59 547.3L1389.09 518.9L1389.59 547.6L1390.09 523.1L1390.59 550.1L1391.09 515.1L1391.59 545.3L1392.09 522.7L1392.59 545.2L1393.09 520.9L1393.59 545.8L1394.09 517.4L1394.59 545.9L1395.09 514.6L1395.59 548.3L1396.09 522.2L1396.59 548.8L1397.09 517.7L1397.59 548.7L1398.09 513.9L1398.59 512.0L1399.09 515.3L1399.59 548.4L1400.09 522.9L1400.59 547.5L1401.09 519.2L1401.59 551.2L1402.09 514.0L1402.59 547.8L1403.09 517.6L1403.59 545.2L1404.09 510.4L1404.59 551.6L1405.09 518.0L1405.59 549.0L1406.09 519.0L1406.59 548.0L1407.09 515.5L1407.59 544.9L1408.09 519.8L1408.59 548.3L1409.09 514.9L1409.59 543.1L1410.09 522.7L1410.59 549.2L1411.09 515.1L1411.59 548.2L1412.09 518.1L1412.59 546.2L1413.09 514.4L1413.59 547.1L1414.09 514.0L1414.59 543.7L1415.09 519.0L1415.59 546.8L1416.09 517.9L1416.59 547.4L1417.09 516.3L1417.59 546.5L1418.09 518.7L1418.59 545.5L1419.09 514.4L1419.59 544.5L1420.09 514.3L1420.59 548.7L1421.09 513.8L1421.59 547.8L1422.09 516.0L1422.59 548.0L1423.09 515.0L1423.59 550.0L1424.09 519.4L1424.59 546.2L1425.09 514.2L1425.59 546.0L1426.09 516.0L1426.59 552.1L1427.09 519.7L1427.59 547.0L1428.09 513.7L1428.59 546.9L1429.09 515.6L1429.59 550.8L1430.09 516.0L1430.59 550.7L1431.09 509.7L1431.59 508.5L1432.09 517.1L1432.59 544.9L1433.09 519.7L1433.59 551.8L1434.09 513.7L1434.59 551.6L1435.09 518.0L1435.59 545.1L1436.09 515.9L1436.59 551.8L1437.09 514.1L1437.59 549.2L1438.09 520.6L1438.59 551.6L1439.09 515.0L1439.59 544.2L1440.09 515.4L1440.59 544.3L1441.09 509.5L1441.59 546.6L1442.09 515.7L1442.59 547.1L1443.09 522.3L1443.59 542.9L1444.09 514.9L1444.59 548.3L1445.09 514.5L1445.59 548.1L1446.09 517.8L1446.59 544.3L1447.09 513.8L1447.59 544.2L1448.09 516.0L1448.59 543.7L1449.09 515.1L1449.59 548.7L1450.09 513.9L1450.59 546.8L1451.09 519.0L1451.59 551.3L1452.09 514.3L1452.59 551.9L1453.09 519.6L1453.59 543.3L1454.09 520.6L1454.59 546.7L1455.09 513.8L1455.59 508.9L1456.09 522.9L1456.59 546.3L1457.09 514.1L1457.59 549.1L1458.09 518.0L1458.59 543.7L1459.09 519.9L1459.59 549.0L1460.09 516.9L1460.59 545.9L1461.09 516.9L1461.59 548.8L1462.09 518.2L1462.59 547.6L1463.09 518.8L1463.59 550.3L1464.09 518.9L1464.59 550.3L1465.09 515.7L1465.59 551.9L1466.09 518.2L1466.59 550.5L1467.09 517.1L1467.59 510.4L1468.09 514.4L1468.59 549.7L1469.09 514.1L1469.59 550.5L1470.09 519.2L1470.59 542.9L1471.09 518.9L1471.59 548.5L1472.09 523.2L1472.59 542.9L1473.09 516.0L1473.59 545.0L1474.09 517.8L1474.59 548.4L1475.09 514.7L1475.59 547.1L1476.09 521.5L1476.59 509.6L1477.09 516.8L1477.59 551.7L1478.09 515.8L1478.59 548.9L1479.09 521.7L1479.59 543.0L1480.09 515.7L1480.59 510.3L1481.09 517.2L1481.59 543.9L1482.09 516.0L1482.59 551.9L1483.09 515.0L1483.59 544.4L1484.09 513.9L1484.59 546.5L1485.09 520.5L1485.59 550.2L1486.09 520.2L1486.59 546.4L1487.09 515.5L1487.59 544.8L1488.09 518.9L1488.59 552.1L1489.09 522.8L1489.59 544.3L1490.09 521.8L1490.59 552.0L1491.09 514.9L1491.59 544.7L1492.09 519.4L1492.59 548.7L1493.09 519.7L1493.59 550.8L1494.09 521.5L1494.59 549.6L1495.09 511.7L1495.59 549.3L1496.09 519.0L1496.59 549.8L1497.09 517.2L1497.59 545.6L1498.09 518.7L1498.59 545.1L1499.09 515.7L1499.59 549.3L1500.09 516.7L1500.59 552.0L1501.09 522.7L1501.50 546.3" stroke="#be2632" stroke-width="1.9" fill="none" stroke-linejoin="round"/><path d="M1010.2 527.4L1011.2 527.4L1012.2 527.4L1013.2 527.3L1014.2 527.2L1015.2 527.2L1016.2 527.1L1017.2 527.0L1018.2 526.8L1019.2 526.8L1020.2 526.6L1021.2 526.5L1022.2 526.3L1023.2 526.3L1024.2 526.0L1025.2 526.0L1026.2 525.8L1027.2 525.7L1028.2 525.3L1029.2 525.3L1030.2 525.1L1031.2 524.9L1032.2 524.8L1033.2 524.4L1034.2 524.3L1035.2 524.3L1036.2 524.2L1037.2 523.7L1038.2 523.6L1039.2 523.1L1040.2 523.2L1041.2 522.7L1042.2 522.6L1043.2 522.1L1044.2 521.9L1045.2 521.8L1046.2 521.8L1047.2 521.3L1048.2 521.3L1049.2 520.5L1050.2 520.9L1051.2 520.6L1052.2 520.0L1053.2 519.4L1054.2 519.7L1055.2 519.1L1056.2 519.1L1057.2 518.3L1058.2 517.9L1059.2 517.4L1060.2 517.8L1061.2 517.6L1062.2 516.3L1063.2 516.4L1064.2 515.6L1065.2 515.4L1066.2 515.4L1067.2 515.4L1068.2 515.0L1069.2 514.8L1070.2 514.5L1071.2 513.3L1072.2 513.8L1073.2 512.4L1074.2 511.6L1075.2 512.3L1076.2 511.7L1077.2 511.3L1078.2 512.0L1079.2 511.4L1080.2 512.1L1081.2 511.1L1082.2 512.5L1083.2 511.1L1084.2 511.4L1085.2 512.0L1086.2 512.0L1087.2 511.7L1088.2 512.1L1089.2 511.0L1090.2 511.5L1091.2 511.5L1092.2 512.1L1093.2 512.1L1094.2 511.7L1095.2 512.2L1096.2 512.1L1097.2 511.7L1098.2 512.2L1099.2 511.5L1100.2 512.0L1101.2 511.7L1102.2 512.0L1103.2 511.7L1104.2 511.4L1105.2 510.9L1106.2 512.1L1107.2 511.0L1108.2 511.7L1109.2 510.8L1110.2 511.1L1111.2 511.5L1112.2 511.5L1113.2 511.1L1114.2 511.3L1115.2 511.1L1116.2 511.9L1117.2 510.9L1118.2 511.0L1119.2 511.6L1120.2 511.5L1121.2 510.6L1122.2 510.9L1123.2 511.9L1124.2 510.8L1125.2 510.5L1126.2 511.4L1127.2 511.3L1128.2 511.5L1129.2 511.6L1130.2 510.8L1131.2 511.2L1132.2 510.7L1133.2 511.0L1134.2 511.5L1135.2 510.4L1136.2 511.1L1137.2 510.9L1138.2 510.9L1139.2 510.8L1140.2 510.7L1141.2 510.9L1142.2 511.2L1143.2 511.2L1144.2 511.1L1145.2 511.0L1146.2 511.7L1147.2 512.2L1148.2 510.8L1149.2 511.7L1150.2 511.4L1151.2 512.2L1152.2 512.1L1153.2 511.0L1154.2 510.7L1155.2 511.6L1156.2 510.4L1157.2 510.5L1158.2 510.3L1159.2 510.4L1160.2 509.7L1161.2 509.3L1162.2 509.5L1163.2 508.2L1164.2 509.0L1165.2 507.9L1166.2 507.9L1167.2 506.9L1168.2 506.2L1169.2 507.1L1170.2 505.4L1171.2 505.9L1172.2 505.3L1173.2 504.9L1174.2 505.2L1175.2 503.7L1176.2 504.0L1177.2 502.7L1178.2 502.6L1179.2 502.2L1180.2 502.3L1181.2 500.5L1182.2 500.3L1183.2 499.0L1184.2 498.4L1185.2 499.0L1186.2 497.2L1187.2 497.5L1188.2 496.5L1189.2 495.0L1190.2 493.8L1191.2 493.9L1192.2 492.4L1193.2 490.9L1194.2 490.0L1195.2 488.5L1196.2 486.6L1197.2 485.5L1198.2 484.1L1199.2 483.5L1200.2 482.0L1201.2 480.9L1202.2 477.7L1203.2 474.8L1204.2 472.3L1205.2 470.0L1206.2 465.6L1207.2 462.6L1208.2 464.3L1209.2 467.1L1210.2 471.2L1211.2 474.2L1212.2 478.2L1213.2 481.5L1214.2 482.3L1215.2 483.6L1216.2 484.5L1217.2 486.5L1218.2 488.2L1219.2 489.4L1220.2 491.5L1221.2 492.3L1222.2 495.2L1223.2 496.1L1224.2 497.5L1225.2 498.4L1226.2 499.6L1227.2 500.2L1228.2 500.8L1229.2 501.8L1230.2 503.7L1231.2 504.4L1232.2 504.8L1233.2 505.5L1234.2 506.6L1235.2 506.2L1236.2 507.2L1237.2 507.7L1238.2 509.2L1239.2 509.9L1240.2 510.6L1241.2 510.6L1242.2 511.3L1243.2 512.2L1244.2 512.6L1245.2 513.0L1246.2 513.2L1247.2 512.8L1248.2 513.3L1249.2 514.4L1250.2 514.5L1251.2 514.3L1252.2 515.3L1253.2 515.0L1254.2 515.2L1255.2 514.6L1256.2 514.4L1257.2 515.4L1258.2 513.9L1259.2 513.9L1260.2 514.8L1261.2 515.3L1262.2 514.2L1263.2 513.9L1264.2 514.1L1265.2 515.0L1266.2 514.3L1267.2 515.0L1268.2 513.9L1269.2 514.8L1270.2 514.8L1271.2 515.2L1272.2 515.3L1273.2 515.1L1274.2 515.3L1275.2 514.6L1276.2 514.1L1277.2 514.2L1278.2 514.0L1279.2 515.1L1280.2 514.4L1281.2 514.1L1282.2 515.2L1283.2 514.3L1284.2 514.0L1285.2 514.9L1286.2 514.8L1287.2 514.3L1288.2 514.0L1289.2 514.2L1290.2 514.4L1291.2 515.0L1292.2 514.0L1293.2 514.5L1294.2 514.4L1295.2 514.3L1296.2 514.6L1297.2 515.2L1298.2 515.2L1299.2 514.5L1300.2 515.4L1301.2 514.3L1302.2 514.8L1303.2 515.3L1304.2 515.1L1305.2 514.6L1306.2 514.3L1307.2 514.7L1308.2 514.1L1309.2 514.9L1310.2 514.0L1311.2 514.9L1312.2 514.0L1313.2 514.9L1314.2 515.2L1315.2 515.3L1316.2 515.0L1317.2 514.5L1318.2 515.2L1319.2 515.0L1320.2 515.2L1321.2 514.8L1322.2 514.7L1323.2 515.0L1324.2 515.0L1325.2 514.4L1326.2 514.8L1327.2 515.1L1328.2 514.9L1329.2 515.4L1330.2 515.2L1331.2 514.7L1332.2 514.2L1333.2 514.8L1334.2 514.2L1335.2 514.8L1336.2 514.6L1337.2 514.9L1338.2 514.1L1339.2 514.7L1340.2 514.1L1341.2 514.5L1342.2 514.6L1343.2 515.4L1344.2 514.8L1345.2 514.9L1346.2 514.4L1347.2 515.0L1348.2 514.5L1349.2 515.3L1350.2 514.4L1351.2 514.8L1352.2 514.8L1353.2 514.7L1354.2 514.5L1355.2 514.2L1356.2 515.4L1357.2 514.0L1358.2 514.3L1359.2 515.2L1360.2 514.9L1361.2 514.0L1362.2 514.5L1363.2 514.7L1364.2 515.4L1365.2 515.0L1366.2 513.9L1367.2 514.2L1368.2 514.9L1369.2 514.0L1370.2 514.9L1371.2 514.0L1372.2 513.9L1373.2 514.1L1374.2 514.8L1375.2 514.9L1376.2 515.1L1377.2 514.4L1378.2 514.7L1379.2 515.1L1380.2 514.6L1381.2 514.5L1382.2 515.0L1383.2 514.9L1384.2 515.3L1385.2 514.5L1386.2 515.4L1387.2 514.2L1388.2 514.9L1389.2 514.1L1390.2 515.2L1391.2 514.6L1392.2 514.5L1393.2 514.3L1394.2 514.7L1395.2 514.2L1396.2 515.1L1397.2 514.8L1398.2 514.2L1399.2 514.0L1400.2 514.4L1401.2 514.1L1402.2 514.5L1403.2 515.3L1404.2 514.8L1405.2 514.9L1406.2 514.7L1407.2 514.6L1408.2 514.9L1409.2 514.0L1410.2 514.1L1411.2 515.4L1412.2 515.2L1413.2 514.3L1414.2 514.4L1415.2 515.1L1416.2 515.3L1417.2 514.4L1418.2 515.2L1419.2 514.8L1420.2 514.3L1421.2 514.0L1422.2 514.9L1423.2 515.0L1424.2 514.7L1425.2 514.8L1426.2 514.5L1427.2 514.2L1428.2 514.5L1429.2 514.8L1430.2 514.6L1431.2 514.5L1432.2 514.6L1433.2 514.3L1434.2 514.5L1435.2 515.1L1436.2 515.3L1437.2 514.9L1438.2 515.2L1439.2 514.2L1440.2 514.1L1441.2 514.2L1442.2 513.9L1443.2 514.8L1444.2 514.5L1445.2 514.0L1446.2 515.1L1447.2 515.3L1448.2 514.1L1449.2 514.7L1450.2 514.0L1451.2 515.4L1452.2 515.1L1453.2 515.1L1454.2 515.3L1455.2 514.3L1456.2 514.3L1457.2 515.1L1458.2 515.2L1459.2 514.2L1460.2 513.9L1461.2 514.8L1462.2 515.0L1463.2 515.3L1464.2 514.2L1465.2 514.9L1466.2 514.8L1467.2 514.7L1468.2 514.9L1469.2 514.6L1470.2 515.3L1471.2 514.8L1472.2 514.1L1473.2 513.9L1474.2 515.2L1475.2 514.1L1476.2 514.7L1477.2 514.8L1478.2 514.7L1479.2 514.3L1480.2 514.3L1481.2 514.4L1482.2 513.9L1483.2 515.1L1484.2 514.5L1485.2 514.5L1486.2 514.9L1487.2 515.4L1488.2 515.1L1489.2 515.3L1490.2 514.3L1491.2 514.9L1492.2 515.2L1493.2 514.6L1494.2 514.7L1495.2 514.0L1496.2 514.3L1497.2 514.7L1498.2 515.2L1499.2 514.3L1500.2 513.9L1501.2 514.7L1501.2 549.5L1500.2 546.4L1499.2 545.5L1498.2 545.8L1497.2 547.8L1496.2 543.2L1495.2 548.6L1494.2 547.3L1493.2 543.9L1492.2 549.9L1491.2 547.1L1490.2 544.8L1489.2 544.6L1488.2 544.2L1487.2 545.3L1486.2 549.2L1485.2 543.7L1484.2 548.1L1483.2 548.3L1482.2 545.1L1481.2 544.7L1480.2 544.9L1479.2 549.9L1478.2 547.2L1477.2 547.2L1476.2 547.2L1475.2 549.2L1474.2 547.9L1473.2 547.5L1472.2 547.3L1471.2 549.5L1470.2 548.4L1469.2 545.0L1468.2 548.5L1467.2 545.0L1466.2 549.9L1465.2 545.3L1464.2 543.5L1463.2 546.2L1462.2 548.2L1461.2 545.2L1460.2 547.2L1459.2 547.7L1458.2 545.6L1457.2 544.5L1456.2 544.2L1455.2 545.6L1454.2 549.1L1453.2 547.1L1452.2 545.1L1451.2 546.9L1450.2 544.3L1449.2 549.6L1448.2 547.4L1447.2 549.4L1446.2 543.6L1445.2 547.5L1444.2 548.0L1443.2 545.5L1442.2 547.4L1441.2 547.8L1440.2 545.2L1439.2 545.6L1438.2 545.9L1437.2 548.6L1436.2 544.4L1435.2 549.4L1434.2 544.1L1433.2 544.8L1432.2 544.2L1431.2 546.1L1430.2 546.3L1429.2 546.8L1428.2 544.7L1427.2 544.0L1426.2 545.1L1425.2 546.2L1424.2 546.1L1423.2 548.0L1422.2 549.1L1421.2 545.2L1420.2 548.1L1419.2 543.5L1418.2 547.2L1417.2 544.5L1416.2 548.6L1415.2 548.6L1414.2 548.9L1413.2 545.2L1412.2 546.1L1411.2 547.0L1410.2 543.7L1409.2 543.1L1408.2 544.6L1407.2 549.7L1406.2 548.0L1405.2 545.7L1404.2 549.9L1403.2 549.2L1402.2 543.6L1401.2 549.1L1400.2 549.1L1399.2 548.1L1398.2 547.4L1397.2 547.7L1396.2 544.3L1395.2 544.5L1394.2 547.9L1393.2 543.8L1392.2 547.0L1391.2 547.0L1390.2 548.0L1389.2 548.8L1388.2 546.4L1387.2 543.7L1386.2 544.0L1385.2 543.7L1384.2 546.6L1383.2 544.7L1382.2 546.4L1381.2 547.6L1380.2 546.0L1379.2 548.9L1378.2 549.0L1377.2 546.6L1376.2 548.6L1375.2 546.5L1374.2 549.3L1373.2 543.4L1372.2 547.7L1371.2 549.3L1370.2 547.1L1369.2 546.5L1368.2 543.8L1367.2 546.2L1366.2 548.8L1365.2 549.2L1364.2 545.8L1363.2 548.3L1362.2 548.0L1361.2 545.5L1360.2 546.0L1359.2 544.7L1358.2 544.3L1357.2 547.0L1356.2 547.0L1355.2 548.9L1354.2 545.1L1353.2 549.4L1352.2 549.2L1351.2 548.2L1350.2 546.7L1349.2 549.3L1348.2 547.9L1347.2 545.6L1346.2 548.9L1345.2 544.4L1344.2 549.3L1343.2 543.6L1342.2 548.7L1341.2 546.9L1340.2 545.1L1339.2 549.8L1338.2 547.4L1337.2 549.0L1336.2 548.2L1335.2 544.7L1334.2 546.6L1333.2 548.3L1332.2 544.4L1331.2 548.0L1330.2 545.0L1329.2 544.9L1328.2 547.7L1327.2 544.7L1326.2 549.0L1325.2 547.8L1324.2 545.1L1323.2 545.9L1322.2 543.7L1321.2 545.9L1320.2 547.3L1319.2 547.1L1318.2 546.0L1317.2 545.0L1316.2 545.9L1315.2 547.9L1314.2 545.4L1313.2 545.6L1312.2 547.9L1311.2 543.8L1310.2 549.6L1309.2 543.2L1308.2 546.4L1307.2 549.2L1306.2 547.9L1305.2 543.7L1304.2 546.7L1303.2 546.0L1302.2 545.6L1301.2 546.7L1300.2 546.5L1299.2 545.3L1298.2 547.0L1297.2 544.0L1296.2 549.8L1295.2 546.1L1294.2 544.6L1293.2 548.7L1292.2 545.9L1291.2 543.3L1290.2 547.3L1289.2 544.5L1288.2 548.9L1287.2 548.6L1286.2 545.3L1285.2 545.7L1284.2 543.7L1283.2 548.2L1282.2 549.8L1281.2 545.4L1280.2 545.5L1279.2 545.3L1278.2 548.0L1277.2 546.7L1276.2 543.2L1275.2 546.5L1274.2 548.5L1273.2 547.3L1272.2 543.4L1271.2 548.4L1270.2 548.0L1269.2 546.1L1268.2 545.7L1267.2 543.7L1266.2 549.8L1265.2 543.4L1264.2 547.1L1263.2 548.1L1262.2 544.3L1261.2 549.1L1260.2 547.2L1259.2 545.2L1258.2 543.3L1257.2 547.7L1256.2 545.4L1255.2 545.6L1254.2 543.5L1253.2 547.0L1252.2 549.2L1251.2 543.6L1250.2 546.2L1249.2 549.4L1248.2 545.3L1247.2 545.6L1246.2 547.3L1245.2 548.2L1244.2 544.5L1243.2 545.2L1242.2 545.2L1241.2 546.8L1240.2 547.7L1239.2 543.9L1238.2 549.2L1237.2 546.9L1236.2 546.5L1235.2 545.3L1234.2 544.7L1233.2 544.6L1232.2 548.3L1231.2 548.6L1230.2 547.6L1229.2 547.2L1228.2 547.6L1227.2 545.4L1226.2 542.6L1225.2 540.0L1224.2 540.3L1223.2 532.5L1222.2 529.1L1221.2 525.6L1220.2 525.1L1219.2 524.1L1218.2 515.3L1217.2 516.6L1216.2 514.1L1215.2 508.4L1214.2 501.6L1213.2 500.5L1212.2 495.2L1211.2 493.3L1210.2 490.6L1209.2 484.8L1208.2 481.3L1207.2 474.3L1206.2 480.1L1205.2 479.8L1204.2 484.4L1203.2 488.2L1202.2 492.4L1201.2 490.2L1200.2 495.4L1199.2 496.5L1198.2 497.2L1197.2 503.9L1196.2 503.4L1195.2 500.9L1194.2 506.4L1193.2 505.1L1192.2 509.7L1191.2 510.3L1190.2 514.0L1189.2 513.4L1188.2 514.4L1187.2 517.8L1186.2 519.9L1185.2 516.4L1184.2 516.9L1183.2 522.5L1182.2 518.5L1181.2 520.0L1180.2 521.8L1179.2 521.1L1178.2 525.7L1177.2 526.6L1176.2 529.2L1175.2 524.5L1174.2 529.3L1173.2 529.2L1172.2 533.0L1171.2 533.3L1170.2 530.9L1169.2 535.5L1168.2 531.2L1167.2 531.6L1166.2 535.1L1165.2 537.2L1164.2 537.6L1163.2 535.9L1162.2 538.4L1161.2 539.0L1160.2 536.5L1159.2 537.0L1158.2 538.8L1157.2 544.9L1156.2 542.2L1155.2 544.0L1154.2 546.7L1153.2 547.0L1152.2 543.2L1151.2 546.0L1150.2 544.6L1149.2 546.0L1148.2 547.0L1147.2 548.8L1146.2 548.2L1145.2 547.7L1144.2 544.3L1143.2 548.4L1142.2 545.1L1141.2 549.7L1140.2 549.1L1139.2 546.0L1138.2 544.5L1137.2 549.0L1136.2 548.3L1135.2 548.0L1134.2 549.2L1133.2 549.8L1132.2 543.5L1131.2 545.7L1130.2 548.9L1129.2 549.7L1128.2 546.8L1127.2 547.5L1126.2 545.4L1125.2 544.8L1124.2 545.6L1123.2 545.2L1122.2 547.3L1121.2 543.3L1120.2 546.6L1119.2 547.9L1118.2 545.0L1117.2 544.6L1116.2 546.3L1115.2 548.6L1114.2 544.1L1113.2 545.7L1112.2 546.5L1111.2 545.9L1110.2 543.4L1109.2 543.7L1108.2 549.0L1107.2 547.4L1106.2 543.2L1105.2 549.2L1104.2 546.9L1103.2 548.5L1102.2 547.6L1101.2 547.3L1100.2 544.2L1099.2 543.8L1098.2 548.4L1097.2 544.4L1096.2 543.5L1095.2 547.1L1094.2 546.6L1093.2 547.8L1092.2 548.7L1091.2 544.9L1090.2 546.1L1089.2 543.7L1088.2 548.7L1087.2 547.0L1086.2 544.9L1085.2 543.9L1084.2 543.5L1083.2 545.4L1082.2 548.3L1081.2 549.8L1080.2 548.8L1079.2 544.0L1078.2 544.1L1077.2 547.2L1076.2 548.6L1075.2 546.3L1074.2 543.4L1073.2 546.7L1072.2 548.7L1071.2 547.5L1070.2 547.8L1069.2 545.8L1068.2 543.8L1067.2 543.6L1066.2 545.2L1065.2 540.2L1064.2 541.7L1063.2 541.0L1062.2 543.0L1061.2 543.0L1060.2 539.5L1059.2 541.0L1058.2 538.1L1057.2 541.3L1056.2 541.4L1055.2 538.3L1054.2 540.5L1053.2 537.8L1052.2 538.2L1051.2 537.0L1050.2 538.8L1049.2 535.7L1048.2 536.2L1047.2 535.5L1046.2 537.0L1045.2 536.5L1044.2 535.8L1043.2 534.4L1042.2 533.6L1041.2 535.0L1040.2 533.3L1039.2 534.5L1038.2 533.3L1037.2 532.9L1036.2 531.8L1035.2 531.8L1034.2 532.4L1033.2 532.3L1032.2 531.6L1031.2 531.7L1030.2 531.7L1029.2 531.0L1028.2 530.3L1027.2 529.8L1026.2 530.6L1025.2 529.9L1024.2 529.3L1023.2 529.4L1022.2 529.7L1021.2 528.9L1020.2 529.0L1019.2 528.5L1018.2 528.8L1017.2 528.5L1016.2 528.3L1015.2 528.2L1014.2 527.9L1013.2 527.8L1012.2 527.6L1011.2 527.5L1010.2 527.4Z" fill="#be2632"/><path d="M1206.14 483.8V81.5H1208.74V483.8ZM1274.01 524.8V419.6H1276.41V524.8ZM1313.95 524.8V470.2H1316.35V524.8ZM1342.56 524.8V437.4H1344.96V524.8ZM1382.22 524.8V440.1H1384.62V524.8ZM1410.56 524.8V441.5H1412.96V524.8ZM1432.75 524.8V455.1H1435.15V524.8ZM1450.49 524.8V477.0H1452.89V524.8ZM1465.68 524.8V500.2H1468.08V524.8ZM1070.96 519.3V501.6H1072.36V519.3Z" fill="#be2632"/></g><rect x="821.5" y="47.5" width="680.0" height="494.0" fill="none" stroke="#6a6a6a" stroke-width="1"/><text x="817" y="58.5" font-size="12" text-anchor="end" fill="#000">+10</text><text x="817" y="85.8" font-size="12" text-anchor="end" fill="#000">0</text><text x="817" y="113.1" font-size="12" text-anchor="end" fill="#000">-10</text><text x="817" y="140.4" font-size="12" text-anchor="end" fill="#000">-20</text><text x="817" y="167.7" font-size="12" text-anchor="end" fill="#000">-30</text><text x="817" y="195.1" font-size="12" text-anchor="end" fill="#000">-40</text><text x="817" y="222.4" font-size="12" text-anchor="end" fill="#000">-50</text><text x="817" y="249.7" font-size="12" text-anchor="end" fill="#000">-60</text><text x="817" y="277.0" font-size="12" text-anchor="end" fill="#000">-70</text><text x="817" y="304.3" font-size="12" text-anchor="end" fill="#000">-80</text><text x="817" y="331.6" font-size="12" text-anchor="end" fill="#000">-90</text><text x="817" y="358.9" font-size="12" text-anchor="end" fill="#000">-100</text><text x="817" y="386.3" font-size="12" text-anchor="end" fill="#000">-110</text><text x="817" y="413.6" font-size="12" text-anchor="end" fill="#000">-120</text><text x="817" y="440.9" font-size="12" text-anchor="end" fill="#000">-130</text><text x="817" y="468.2" font-size="12" text-anchor="end" fill="#000">-140</text><text x="817" y="495.5" font-size="12" text-anchor="end" fill="#000">-150</text><text x="817" y="522.8" font-size="12" text-anchor="end" fill="#000">-160</text><text x="821.2" y="556" font-size="12" text-anchor="middle" fill="#000">20</text><text x="861.1" y="556" font-size="12" text-anchor="middle" fill="#000">30</text><text x="911.5" y="556" font-size="12" text-anchor="middle" fill="#000">50</text><text x="979.7" y="556" font-size="12" text-anchor="middle" fill="#000">100</text><text x="1048.0" y="556" font-size="12" text-anchor="middle" fill="#000">200</text><text x="1087.9" y="556" font-size="12" text-anchor="middle" fill="#000">300</text><text x="1138.3" y="556" font-size="12" text-anchor="middle" fill="#000">500</text><text x="1206.5" y="556" font-size="12" text-anchor="middle" fill="#000">1k</text><text x="1274.8" y="556" font-size="12" text-anchor="middle" fill="#000">2k</text><text x="1314.7" y="556" font-size="12" text-anchor="middle" fill="#000">3k</text><text x="1365.1" y="556" font-size="12" text-anchor="middle" fill="#000">5k</text><text x="1433.3" y="556" font-size="12" text-anchor="middle" fill="#000">10k</text><text x="1501.6" y="556" font-size="12" text-anchor="middle" fill="#000">20k</text><text x="1161" y="44" font-size="12" text-anchor="middle" fill="#000">FFT</text><text x="1160.7" y="568" font-size="12" text-anchor="middle" fill="#000" textLength="78.8" lengthAdjust="spacingAndGlyphs">Frequency (Hz)</text><text x="787" y="294.2" font-size="12" text-anchor="middle" fill="#000" textLength="62.5" lengthAdjust="spacingAndGlyphs" transform="rotate(-90 787 294.2)">Level (dBrA)</text></svg>
</section>
<section aria-label="Graph controls">
<span class="t" style="left:17.20px;top:587px;font-size:12px;line-height:14px;color:#000;transform:scaleX(0.9957);">Interpolated:</span>
<svg class="a" style="left:99.1px;top:586.0px" width="14" height="14" viewBox="0 0 14 14"><circle cx="7" cy="7" r="6.5" fill="#0a5fb8"/><circle cx="7" cy="7" r="2.6" fill="#fff"/></svg>
<span class="t" style="left:119.60px;top:587px;font-size:12px;line-height:14px;color:#000;transform:scaleX(0.9500);">On</span>
<svg class="a" style="left:149.0px;top:586.0px" width="14" height="14" viewBox="0 0 14 14"><circle cx="7" cy="7" r="6.1" fill="#f4f4f4" stroke="#5e5e5e" stroke-width="1.2"/></svg>
<span class="t" style="left:168.50px;top:587px;font-size:12px;line-height:14px;color:#000;transform:scaleX(1.0245);">Off</span>
<span class="t" style="left:206.20px;top:586px;font-size:12px;line-height:14px;color:#000;transform:scaleX(0.9367);">Show Residual:</span>
<div class="b" style="left:298px;top:581.1px;width:121px;height:22.4px;background:#fff;border:1px solid #d2d2d2;border-bottom-color:#b9b9b9;box-sizing:border-box;border-radius:2.5px;"></div>
<svg class="a" style="left:405.5px;top:589.6px" width="9" height="6" viewBox="0 0 9 6"><path d="M0.4 0.6L4.5 4.8L8.6 0.6" stroke="#4a4a4a" stroke-width="1" fill="none"/></svg>
<span class="t" style="left:301.90px;top:586.2px;font-size:12px;line-height:14px;color:#000;transform:scaleX(0.9866);">Off</span>
<span class="t" style="left:431.30px;top:586px;font-size:12px;line-height:14px;color:#000;transform:scaleX(0.9355);">Show Cycles:</span>
<div class="b" style="left:512px;top:581px;width:70px;height:23px;background:#fff;border:1px solid #a2a5ac;box-sizing:border-box;"></div>
<div class="b" style="left:566px;top:583px;width:14px;height:19px;background:#f3f3f3;"></div>
<div class="b" style="left:567px;top:584px;width:12px;height:7px;background:#fbfbfb;border:1px solid #dedede;box-sizing:border-box;border-top-color:#ececec;"></div>
<div class="b" style="left:567px;top:593px;width:12px;height:8px;background:#fbfbfb;border:1px solid #dedede;box-sizing:border-box;"></div>
<svg class="a" style="left:569.8px;top:585.6px" width="6" height="3.6" viewBox="0 0 6 3.6"><path d="M0 3.6H6L3 0Z" fill="#000"/></svg>
<svg class="a" style="left:569.8px;top:595.2px" width="6" height="3.6" viewBox="0 0 6 3.6"><path d="M0 0H6L3 3.6Z" fill="#000"/></svg>
<span class="t" style="left:514.60px;top:584.3px;font-size:12px;line-height:14px;color:#000;">3</span>
<span class="t" style="left:784.50px;top:586px;font-size:12px;line-height:14px;color:#000;transform:scaleX(0.9321);">FFT Length:</span>
<div class="b" style="left:858px;top:581.1px;width:62px;height:22.4px;background:#fff;border:1px solid #d2d2d2;border-bottom-color:#b9b9b9;box-sizing:border-box;border-radius:2.5px;"></div>
<svg class="a" style="left:906.5px;top:589.6px" width="9" height="6" viewBox="0 0 9 6"><path d="M0.4 0.6L4.5 4.8L8.6 0.6" stroke="#4a4a4a" stroke-width="1" fill="none"/></svg>
<span class="t" style="left:861.90px;top:586.2px;font-size:12px;line-height:14px;color:#000;transform:scaleX(0.9000);">256K</span>
<span class="t" style="left:931.70px;top:586px;font-size:12px;line-height:14px;color:#000;transform:scaleX(0.9935);">Window:</span>
<div class="b" style="left:990.4px;top:581.1px;width:180.6px;height:22.4px;background:#fff;border:1px solid #d2d2d2;border-bottom-color:#b9b9b9;box-sizing:border-box;border-radius:2.5px;"></div>
<svg class="a" style="left:1157.5px;top:589.6px" width="9" height="6" viewBox="0 0 9 6"><path d="M0.4 0.6L4.5 4.8L8.6 0.6" stroke="#4a4a4a" stroke-width="1" fill="none"/></svg>
<span class="t" style="left:994.30px;top:586.2px;font-size:12px;line-height:14px;color:#000;transform:scaleX(0.9949);">AP-Equiripple</span>
<span class="t" style="left:1182.40px;top:586px;font-size:12px;line-height:14px;color:#000;transform:scaleX(0.9347);">Averages:</span>
<div class="b" style="left:1245px;top:581px;width:70px;height:23px;background:#fff;border:1px solid #a2a5ac;box-sizing:border-box;"></div>
<div class="b" style="left:1299px;top:583px;width:14px;height:19px;background:#f3f3f3;"></div>
<div class="b" style="left:1300px;top:584px;width:12px;height:7px;background:#fbfbfb;border:1px solid #dedede;box-sizing:border-box;border-top-color:#ececec;"></div>
<div class="b" style="left:1300px;top:593px;width:12px;height:8px;background:#fbfbfb;border:1px solid #dedede;box-sizing:border-box;"></div>
<svg class="a" style="left:1302.8px;top:585.6px" width="6" height="3.6" viewBox="0 0 6 3.6"><path d="M0 3.6H6L3 0Z" fill="#000"/></svg>
<svg class="a" style="left:1302.8px;top:595.2px" width="6" height="3.6" viewBox="0 0 6 3.6"><path d="M0 0H6L3 3.6Z" fill="#000"/></svg>
<span class="t" style="left:1247.60px;top:584.3px;font-size:12px;line-height:14px;color:#000;">3</span>
<div class="b" style="left:1322px;top:586px;width:13px;height:13px;background:#f5f5f5;border:1px solid #4f4f4f;box-sizing:border-box;border-radius:3px;"></div>
<span class="t" style="left:1341.40px;top:586px;font-size:12px;line-height:14px;color:#000;transform:scaleX(0.9368);">Show Residual</span>
<div class="b" style="left:1431px;top:582px;width:60px;height:23px;background:#fdfdfd;border:1px solid #d0d0d0;box-sizing:border-box;border-radius:3px;"></div>
<span class="t" style="left:1453.40px;top:587px;font-size:12px;line-height:14px;color:#000;transform:scaleX(0.8797);">Reset</span>
<div class="b" style="left:1484px;top:578px;width:48px;height:30px;background:#f0f0f0;"></div>
<div class="b" style="left:1491px;top:579.2px;width:32px;height:24.6px;background:#fdfdfd;border:1px solid #d0d0d0;box-sizing:border-box;border-radius:4px;"></div>
<span class="t" style="left:1498.60px;top:585.4px;font-size:12px;line-height:14px;color:#000;letter-spacing:1.2px;">&gt;&gt;</span>
</section>
<section aria-label="Meter toolbar">
<div class="b" style="left:0px;top:622px;width:1535px;height:7px;background:#487685;"></div>
<div class="b" style="left:760px;top:624px;width:3px;height:3px;background:#d2d8dc;border-radius:50%;"></div>
<div class="b" style="left:766px;top:624px;width:3px;height:3px;background:#d2d8dc;border-radius:50%;"></div>
<div class="b" style="left:772px;top:624px;width:3px;height:3px;background:#d2d8dc;border-radius:50%;"></div>
<div class="b" style="left:0px;top:629px;width:1535px;height:24px;background:#d3d3d3;"></div>
<div class="b" style="left:0px;top:653px;width:1535px;height:1px;background:#e6eef2;"></div>
<svg class="a" style="left:2px;top:633px" width="16" height="16" viewBox="0 0 16 16"><rect width="16" height="16" fill="#1a374a"/><rect x="1" y="1" width="14" height="14" fill="url(#sl)"/><path d="M2 8H14M8 2V14" stroke="#fff" stroke-width="2.4"/></svg>
<span class="t" style="left:21.00px;top:634px;font-size:12px;line-height:14px;color:#000;transform:scaleX(1.0113);">Add Meter</span>
<svg class="a" style="left:83px;top:640px" width="5" height="3" viewBox="0 0 5 3"><path d="M0 0H5L2.5 3Z" fill="#000"/></svg>
<div class="b" style="left:95px;top:635px;width:1px;height:15px;background:#c4c4c4;"></div>
<div class="b" style="left:96px;top:635px;width:1px;height:15px;background:#fff;"></div>
<svg class="a" style="left:100px;top:633px" width="16" height="16" viewBox="0 0 16 16"><rect width="16" height="16" fill="#1a374a"/><rect x="1" y="1" width="14" height="14" fill="url(#sl)"/><g fill="#fff"><ellipse cx="5.4" cy="3.8" rx="4.5" ry="2.1"/><path d="M1 6.2Q4 7.6 7 7.2V8.9Q4 9.4 1 8.4Z"/><path d="M1 9.3Q4 10.7 7 10.3V12Q4 12.5 1 11.5Z"/><path d="M1 12.3Q5.4 14.2 9.8 12.3V13.6Q9.8 15.3 5.4 15.3Q1 15.3 1 13.6Z"/><path d="M7.8 7.2H11.6V4.9L16 8.5L11.6 12.1V9.9H7.8Z"/></g><ellipse cx="5.4" cy="3.5" rx="1.5" ry="0.45" fill="#3f7080"/></svg>
<span class="t" style="left:119.20px;top:634px;font-size:12px;line-height:14px;color:#000;transform:scaleX(0.9327);">Save Meter Data</span>
<div class="b" style="left:213px;top:635px;width:1px;height:15px;background:#c4c4c4;"></div>
<div class="b" style="left:214px;top:635px;width:1px;height:15px;background:#fff;"></div>
<svg class="a" style="left:218px;top:633px" width="16" height="16" viewBox="0 0 16 16"><rect width="16" height="16" fill="#1a374a"/><rect x="1" y="1" width="14" height="14" fill="url(#sl)"/><path d="M5 3L12 8L5 13Z" fill="#fff"/></svg>
<span class="t" style="left:237.60px;top:634px;font-size:12px;line-height:14px;color:#000;transform:scaleX(0.9404);">Regulate</span>
<svg class="a" style="left:1515px;top:636px" width="13" height="10" viewBox="0 0 13 10"><path d="M5 0H8V3H10.5L6.5 7L2.5 3H5Z" fill="#2a4a86"/><rect x="0" y="8.6" width="13" height="1.4" fill="#2a4a86"/></svg>
</section>
<section aria-label="RMS Level meter">
<div class="b" style="left:3px;top:657px;width:749px;height:158px;background:#dae5e7;"></div>
<div class="b" style="left:3px;top:682px;width:749px;height:1px;background:#979c9e;"></div>
<div class="b" style="left:3px;top:683px;width:749px;height:2px;background:#f4f8f9;"></div>
<span class="t" style="left:7.40px;top:661px;font-size:15px;line-height:17px;color:#000;font-weight:bold;transform:scaleX(1.0161);">RMS Level</span>
<div class="b" style="left:92px;top:658px;width:75px;height:23px;background:#fff;"></div>
<div class="b" style="left:155px;top:658px;width:12px;height:23px;background:#fafafa;"></div>
<svg class="a" style="left:158px;top:668px" width="5" height="3" viewBox="0 0 5 3"><path d="M0 0H5L2.5 3Z" fill="#000"/></svg>
<span class="t" style="left:96.50px;top:663px;font-size:12px;line-height:14px;color:#000;transform:scaleX(0.9506);">Vrms</span>
<svg class="a" style="left:170px;top:661px" width="16" height="16" viewBox="0 0 16 16"><rect width="16" height="16" fill="#1a374a"/><rect x="1" y="1" width="14" height="14" fill="url(#sl)"/><rect x="1" y="3" width="14" height="2" fill="#fff"/><rect x="1" y="5" width="14" height="3.5" fill="#4a5e96"/><rect x="1" y="8.5" width="14" height="2.5" fill="#4a7d88"/><rect x="1" y="11" width="14" height="2" fill="#fff"/><path d="M1.5 11L5.5 6.5L9.5 11L14.5 5" stroke="#fff" stroke-width="1" fill="none"/></svg>
<svg class="a" style="left:187.8px;top:668px" width="5" height="3" viewBox="0 0 5 3"><path d="M0 0H5L2.5 3Z" fill="#000"/></svg>
<svg class="a" style="left:200px;top:661px" width="16" height="16" viewBox="0 0 16 16"><rect width="16" height="16" fill="#1a374a"/><rect x="1" y="1" width="14" height="14" fill="url(#sl)"/><g transform="translate(8,8)" fill="#fff"><rect x="-1.5" y="-6.2" width="3" height="3" transform="rotate(0)"/><rect x="-1.5" y="-6.2" width="3" height="3" transform="rotate(45)"/><rect x="-1.5" y="-6.2" width="3" height="3" transform="rotate(90)"/><rect x="-1.5" y="-6.2" width="3" height="3" transform="rotate(135)"/><rect x="-1.5" y="-6.2" width="3" height="3" transform="rotate(180)"/><rect x="-1.5" y="-6.2" width="3" height="3" transform="rotate(225)"/><rect x="-1.5" y="-6.2" width="3" height="3" transform="rotate(270)"/><rect x="-1.5" y="-6.2" width="3" height="3" transform="rotate(315)"/><circle r="4.6"/><circle r="2" fill="#2f4a78"/></g></svg>
<div class="b" style="left:702px;top:662px;width:1px;height:16px;background:#b4bcbe;"></div>
<div class="b" style="left:703px;top:663px;width:1px;height:16px;background:#fff;"></div>
<svg class="a" style="left:710px;top:663px" width="12" height="12" viewBox="0 0 12 12"><path d="M4 0H0V12H12V8H10V10H2V2H4Z" fill="#1b3a82"/><path d="M6 0H12V6Z" fill="#1b3a82"/><path d="M10 2L5.8 6.2" stroke="#1b3a82" stroke-width="2" stroke-linecap="round"/></svg>
<svg class="a" style="left:734px;top:664px" width="10" height="10" viewBox="0 0 10 10"><path d="M1 1L9 9M9 1L1 9" stroke="#1f3b4b" stroke-width="2.3" stroke-linecap="round"/></svg>
<span class="t" style="left:10.40px;top:700.3px;font-size:31px;line-height:35px;color:#000;transform:scaleX(0.9178);-webkit-text-stroke:0.6px #dae5e7;">Ch1</span>
<svg class="a" style="left:181px;top:712px" width="10" height="9.5" viewBox="0 0 10 9.5"><path d="M0 0H10L5.0 9.5Z" fill="#000"/></svg>
<span class="t" style="left:10.40px;top:763.8px;font-size:31px;line-height:35px;color:#000;transform:scaleX(0.9530);-webkit-text-stroke:0.6px #dae5e7;">Ch2</span>
<svg class="a" style="left:181px;top:775px" width="10" height="9.5" viewBox="0 0 10 9.5"><path d="M0 0H10L5.0 9.5Z" fill="#000"/></svg>
<div class="b" style="left:5px;top:747px;width:189px;height:1px;background:#8f9597;"></div>
<div class="b" style="left:194px;top:687px;width:549px;height:60px;background:#000;"></div>
<div class="b" style="left:194px;top:747px;width:549px;height:2px;background:#dfe3e4;"></div>
<div class="b" style="left:194px;top:749px;width:549px;height:61px;background:#000;"></div>
<div class="b" style="left:194px;top:749px;width:549px;height:1px;background:#9aa0a2;"></div>
<div class="b" style="left:194px;top:728px;width:549px;height:18px;background:#808080;border:1px solid #d9d9d9;box-sizing:border-box;"></div>
<div class="b" style="left:195px;top:729px;width:406.6px;height:16px;background:#00ff00;"></div>
<div class="b" style="left:195px;top:735px;width:406.6px;height:3px;background:#000;"></div>
<div class="b" style="left:194px;top:750px;width:549px;height:18px;background:#808080;border:1px solid #d9d9d9;box-sizing:border-box;"></div>
<div class="b" style="left:195px;top:751px;width:406.6px;height:16px;background:#00ff00;"></div>
<div class="b" style="left:195px;top:757px;width:406.6px;height:3px;background:#000;"></div>
<span class="t" style="left:551.70px;top:690.8px;font-size:33px;line-height:37px;color:#00ff00;transform:scaleX(0.8951);">3.977</span>
<span class="t" style="left:663.60px;top:690.8px;font-size:33px;line-height:37px;color:#00ff00;transform:scaleX(0.9611);">Vrms</span>
<span class="t" style="left:551.70px;top:770.8px;font-size:33px;line-height:37px;color:#00ff00;transform:scaleX(0.8951);">3.977</span>
<span class="t" style="left:663.60px;top:770.8px;font-size:33px;line-height:37px;color:#00ff00;transform:scaleX(0.9611);">Vrms</span>
</section>
<section aria-label="THD+N Ratio meter">
<div class="b" style="left:758px;top:657px;width:749px;height:158px;background:#dae5e7;"></div>
<div class="b" style="left:758px;top:682px;width:749px;height:1px;background:#979c9e;"></div>
<div class="b" style="left:758px;top:683px;width:749px;height:2px;background:#f4f8f9;"></div>
<span class="t" style="left:762.40px;top:661px;font-size:15px;line-height:17px;color:#000;font-weight:bold;transform:scaleX(1.0808);">THD+N Ratio</span>
<div class="b" style="left:870px;top:658px;width:75px;height:23px;background:#fff;"></div>
<div class="b" style="left:933px;top:658px;width:12px;height:23px;background:#fafafa;"></div>
<svg class="a" style="left:936px;top:668px" width="5" height="3" viewBox="0 0 5 3"><path d="M0 0H5L2.5 3Z" fill="#000"/></svg>
<span class="t" style="left:874.50px;top:663px;font-size:12px;line-height:14px;color:#000;transform:scaleX(0.8982);">%</span>
<svg class="a" style="left:948px;top:661px" width="16" height="16" viewBox="0 0 16 16"><rect width="16" height="16" fill="#1a374a"/><rect x="1" y="1" width="14" height="14" fill="url(#sl)"/><rect x="1" y="3" width="14" height="2" fill="#fff"/><rect x="1" y="5" width="14" height="3.5" fill="#4a5e96"/><rect x="1" y="8.5" width="14" height="2.5" fill="#4a7d88"/><rect x="1" y="11" width="14" height="2" fill="#fff"/><path d="M1.5 11L5.5 6.5L9.5 11L14.5 5" stroke="#fff" stroke-width="1" fill="none"/></svg>
<svg class="a" style="left:965.8px;top:668px" width="5" height="3" viewBox="0 0 5 3"><path d="M0 0H5L2.5 3Z" fill="#000"/></svg>
<svg class="a" style="left:978px;top:661px" width="16" height="16" viewBox="0 0 16 16"><rect width="16" height="16" fill="#1a374a"/><rect x="1" y="1" width="14" height="14" fill="url(#sl)"/><g transform="translate(8,8)" fill="#fff"><rect x="-1.5" y="-6.2" width="3" height="3" transform="rotate(0)"/><rect x="-1.5" y="-6.2" width="3" height="3" transform="rotate(45)"/><rect x="-1.5" y="-6.2" width="3" height="3" transform="rotate(90)"/><rect x="-1.5" y="-6.2" width="3" height="3" transform="rotate(135)"/><rect x="-1.5" y="-6.2" width="3" height="3" transform="rotate(180)"/><rect x="-1.5" y="-6.2" width="3" height="3" transform="rotate(225)"/><rect x="-1.5" y="-6.2" width="3" height="3" transform="rotate(270)"/><rect x="-1.5" y="-6.2" width="3" height="3" transform="rotate(315)"/><circle r="4.6"/><circle r="2" fill="#2f4a78"/></g></svg>
<div class="b" style="left:1457px;top:662px;width:1px;height:16px;background:#b4bcbe;"></div>
<div class="b" style="left:1458px;top:663px;width:1px;height:16px;background:#fff;"></div>
<svg class="a" style="left:1465px;top:663px" width="12" height="12" viewBox="0 0 12 12"><path d="M4 0H0V12H12V8H10V10H2V2H4Z" fill="#1b3a82"/><path d="M6 0H12V6Z" fill="#1b3a82"/><path d="M10 2L5.8 6.2" stroke="#1b3a82" stroke-width="2" stroke-linecap="round"/></svg>
<svg class="a" style="left:1489px;top:664px" width="10" height="10" viewBox="0 0 10 10"><path d="M1 1L9 9M9 1L1 9" stroke="#1f3b4b" stroke-width="2.3" stroke-linecap="round"/></svg>
<span class="t" style="left:765.40px;top:700.3px;font-size:31px;line-height:35px;color:#000;transform:scaleX(0.9178);-webkit-text-stroke:0.6px #dae5e7;">Ch1</span>
<svg class="a" style="left:936px;top:712px" width="10" height="9.5" viewBox="0 0 10 9.5"><path d="M0 0H10L5.0 9.5Z" fill="#000"/></svg>
<span class="t" style="left:765.40px;top:763.8px;font-size:31px;line-height:35px;color:#000;transform:scaleX(0.9530);-webkit-text-stroke:0.6px #dae5e7;">Ch2</span>
<svg class="a" style="left:936px;top:775px" width="10" height="9.5" viewBox="0 0 10 9.5"><path d="M0 0H10L5.0 9.5Z" fill="#000"/></svg>
<div class="b" style="left:760px;top:747px;width:189px;height:1px;background:#8f9597;"></div>
<div class="b" style="left:949px;top:687px;width:549px;height:60px;background:#000;"></div>
<div class="b" style="left:949px;top:747px;width:549px;height:2px;background:#dfe3e4;"></div>
<div class="b" style="left:949px;top:749px;width:549px;height:61px;background:#000;"></div>
<div class="b" style="left:949px;top:749px;width:549px;height:1px;background:#9aa0a2;"></div>
<div class="b" style="left:949px;top:728px;width:549px;height:18px;background:#808080;border:1px solid #d9d9d9;box-sizing:border-box;"></div>
<div class="b" style="left:950px;top:729px;width:25.5px;height:16px;background:#00ff00;"></div>
<div class="b" style="left:964.8px;top:735px;width:532.2px;height:3px;background:#000;"></div>
<div class="b" style="left:949px;top:750px;width:549px;height:18px;background:#808080;border:1px solid #d9d9d9;box-sizing:border-box;"></div>
<div class="b" style="left:950px;top:751px;width:22.700000000000045px;height:16px;background:#00ff00;"></div>
<div class="b" style="left:964.8px;top:757px;width:532.2px;height:3px;background:#000;"></div>
<span class="t" style="left:1317.90px;top:690.8px;font-size:33px;line-height:37px;color:#00ff00;transform:scaleX(0.9163);">0.000187</span>
<span class="t" style="left:1467.10px;top:690.8px;font-size:33px;line-height:37px;color:#00ff00;transform:scaleX(0.8665);">%</span>
<span class="t" style="left:1317.90px;top:770.8px;font-size:33px;line-height:37px;color:#00ff00;transform:scaleX(0.9075);">0.000175</span>
<span class="t" style="left:1467.10px;top:770.8px;font-size:33px;line-height:37px;color:#00ff00;transform:scaleX(0.8665);">%</span>
</section>
<section aria-label="Frequency meter">
<div class="b" style="left:3px;top:821px;width:749px;height:158px;background:#dae5e7;"></div>
<div class="b" style="left:3px;top:846px;width:749px;height:1px;background:#979c9e;"></div>
<div class="b" style="left:3px;top:847px;width:749px;height:2px;background:#f4f8f9;"></div>
<span class="t" style="left:7.40px;top:825px;font-size:15px;line-height:17px;color:#000;font-weight:bold;transform:scaleX(1.0359);">Frequency</span>
<div class="b" style="left:93px;top:822px;width:75px;height:23px;background:#fff;"></div>
<div class="b" style="left:156px;top:822px;width:12px;height:23px;background:#fafafa;"></div>
<svg class="a" style="left:159px;top:832px" width="5" height="3" viewBox="0 0 5 3"><path d="M0 0H5L2.5 3Z" fill="#000"/></svg>
<span class="t" style="left:97.50px;top:827px;font-size:12px;line-height:14px;color:#000;transform:scaleX(0.9055);">Hz</span>
<svg class="a" style="left:171px;top:825px" width="16" height="16" viewBox="0 0 16 16"><rect width="16" height="16" fill="#1a374a"/><rect x="1" y="1" width="14" height="14" fill="url(#sl)"/><rect x="1" y="3" width="14" height="2" fill="#fff"/><rect x="1" y="5" width="14" height="3.5" fill="#4a5e96"/><rect x="1" y="8.5" width="14" height="2.5" fill="#4a7d88"/><rect x="1" y="11" width="14" height="2" fill="#fff"/><path d="M1.5 11L5.5 6.5L9.5 11L14.5 5" stroke="#fff" stroke-width="1" fill="none"/></svg>
<svg class="a" style="left:188.8px;top:832px" width="5" height="3" viewBox="0 0 5 3"><path d="M0 0H5L2.5 3Z" fill="#000"/></svg>
<svg class="a" style="left:201px;top:825px" width="16" height="16" viewBox="0 0 16 16"><rect width="16" height="16" fill="#1a374a"/><rect x="1" y="1" width="14" height="14" fill="url(#sl)"/><g transform="translate(8,8)" fill="#fff"><rect x="-1.5" y="-6.2" width="3" height="3" transform="rotate(0)"/><rect x="-1.5" y="-6.2" width="3" height="3" transform="rotate(45)"/><rect x="-1.5" y="-6.2" width="3" height="3" transform="rotate(90)"/><rect x="-1.5" y="-6.2" width="3" height="3" transform="rotate(135)"/><rect x="-1.5" y="-6.2" width="3" height="3" transform="rotate(180)"/><rect x="-1.5" y="-6.2" width="3" height="3" transform="rotate(225)"/><rect x="-1.5" y="-6.2" width="3" height="3" transform="rotate(270)"/><rect x="-1.5" y="-6.2" width="3" height="3" transform="rotate(315)"/><circle r="4.6"/><circle r="2" fill="#2f4a78"/></g></svg>
<div class="b" style="left:702px;top:826px;width:1px;height:16px;background:#b4bcbe;"></div>
<div class="b" style="left:703px;top:827px;width:1px;height:16px;background:#fff;"></div>
<svg class="a" style="left:710px;top:827px" width="12" height="12" viewBox="0 0 12 12"><path d="M4 0H0V12H12V8H10V10H2V2H4Z" fill="#1b3a82"/><path d="M6 0H12V6Z" fill="#1b3a82"/><path d="M10 2L5.8 6.2" stroke="#1b3a82" stroke-width="2" stroke-linecap="round"/></svg>
<svg class="a" style="left:734px;top:828px" width="10" height="10" viewBox="0 0 10 10"><path d="M1 1L9 9M9 1L1 9" stroke="#1f3b4b" stroke-width="2.3" stroke-linecap="round"/></svg>
<span class="t" style="left:10.40px;top:864.3px;font-size:31px;line-height:35px;color:#000;transform:scaleX(0.9178);-webkit-text-stroke:0.6px #dae5e7;">Ch1</span>
<svg class="a" style="left:181px;top:876px" width="10" height="9.5" viewBox="0 0 10 9.5"><path d="M0 0H10L5.0 9.5Z" fill="#000"/></svg>
<span class="t" style="left:10.40px;top:927.8px;font-size:31px;line-height:35px;color:#000;transform:scaleX(0.9530);-webkit-text-stroke:0.6px #dae5e7;">Ch2</span>
<svg class="a" style="left:181px;top:939px" width="10" height="9.5" viewBox="0 0 10 9.5"><path d="M0 0H10L5.0 9.5Z" fill="#000"/></svg>
<div class="b" style="left:5px;top:911px;width:189px;height:1px;background:#8f9597;"></div>
<div class="b" style="left:194px;top:851px;width:549px;height:60px;background:#000;"></div>
<div class="b" style="left:194px;top:911px;width:549px;height:2px;background:#dfe3e4;"></div>
<div class="b" style="left:194px;top:913px;width:549px;height:61px;background:#000;"></div>
<div class="b" style="left:194px;top:913px;width:549px;height:1px;background:#9aa0a2;"></div>
<div class="b" style="left:194px;top:892px;width:549px;height:18px;background:#808080;border:1px solid #d9d9d9;box-sizing:border-box;"></div>
<div class="b" style="left:195px;top:893px;width:310.5px;height:16px;background:#00ff00;"></div>
<div class="b" style="left:195px;top:899px;width:547px;height:3px;background:#000;"></div>
<div class="b" style="left:194px;top:914px;width:549px;height:18px;background:#808080;border:1px solid #d9d9d9;box-sizing:border-box;"></div>
<div class="b" style="left:195px;top:915px;width:310.5px;height:16px;background:#00ff00;"></div>
<div class="b" style="left:195px;top:921px;width:547px;height:3px;background:#000;"></div>
<span class="t" style="left:545.80px;top:854.8px;font-size:33px;line-height:37px;color:#00ff00;transform:scaleX(0.8960);">1.00010</span>
<span class="t" style="left:686.00px;top:854.8px;font-size:33px;line-height:37px;color:#00ff00;transform:scaleX(0.9259);">kHz</span>
<span class="t" style="left:545.80px;top:934.8px;font-size:33px;line-height:37px;color:#00ff00;transform:scaleX(0.8960);">1.00010</span>
<span class="t" style="left:686.00px;top:934.8px;font-size:33px;line-height:37px;color:#00ff00;transform:scaleX(0.9259);">kHz</span>
</section>
<section aria-label="SINAD meter">
<div class="b" style="left:758px;top:821px;width:749px;height:158px;background:#dae5e7;"></div>
<div class="b" style="left:758px;top:846px;width:749px;height:1px;background:#979c9e;"></div>
<div class="b" style="left:758px;top:847px;width:749px;height:2px;background:#f4f8f9;"></div>
<span class="t" style="left:762.40px;top:825px;font-size:15px;line-height:17px;color:#000;font-weight:bold;transform:scaleX(1.0560);">SINAD</span>
<div class="b" style="left:819px;top:822px;width:75px;height:23px;background:#fff;"></div>
<div class="b" style="left:882px;top:822px;width:12px;height:23px;background:#fafafa;"></div>
<svg class="a" style="left:885px;top:832px" width="5" height="3" viewBox="0 0 5 3"><path d="M0 0H5L2.5 3Z" fill="#000"/></svg>
<span class="t" style="left:823.50px;top:827px;font-size:12px;line-height:14px;color:#000;transform:scaleX(0.9055);">dB</span>
<svg class="a" style="left:897px;top:825px" width="16" height="16" viewBox="0 0 16 16"><rect width="16" height="16" fill="#1a374a"/><rect x="1" y="1" width="14" height="14" fill="url(#sl)"/><rect x="1" y="3" width="14" height="2" fill="#fff"/><rect x="1" y="5" width="14" height="3.5" fill="#4a5e96"/><rect x="1" y="8.5" width="14" height="2.5" fill="#4a7d88"/><rect x="1" y="11" width="14" height="2" fill="#fff"/><path d="M1.5 11L5.5 6.5L9.5 11L14.5 5" stroke="#fff" stroke-width="1" fill="none"/></svg>
<svg class="a" style="left:914.8px;top:832px" width="5" height="3" viewBox="0 0 5 3"><path d="M0 0H5L2.5 3Z" fill="#000"/></svg>
<svg class="a" style="left:927px;top:825px" width="16" height="16" viewBox="0 0 16 16"><rect width="16" height="16" fill="#1a374a"/><rect x="1" y="1" width="14" height="14" fill="url(#sl)"/><g transform="translate(8,8)" fill="#fff"><rect x="-1.5" y="-6.2" width="3" height="3" transform="rotate(0)"/><rect x="-1.5" y="-6.2" width="3" height="3" transform="rotate(45)"/><rect x="-1.5" y="-6.2" width="3" height="3" transform="rotate(90)"/><rect x="-1.5" y="-6.2" width="3" height="3" transform="rotate(135)"/><rect x="-1.5" y="-6.2" width="3" height="3" transform="rotate(180)"/><rect x="-1.5" y="-6.2" width="3" height="3" transform="rotate(225)"/><rect x="-1.5" y="-6.2" width="3" height="3" transform="rotate(270)"/><rect x="-1.5" y="-6.2" width="3" height="3" transform="rotate(315)"/><circle r="4.6"/><circle r="2" fill="#2f4a78"/></g></svg>
<div class="b" style="left:1457px;top:826px;width:1px;height:16px;background:#b4bcbe;"></div>
<div class="b" style="left:1458px;top:827px;width:1px;height:16px;background:#fff;"></div>
<svg class="a" style="left:1465px;top:827px" width="12" height="12" viewBox="0 0 12 12"><path d="M4 0H0V12H12V8H10V10H2V2H4Z" fill="#1b3a82"/><path d="M6 0H12V6Z" fill="#1b3a82"/><path d="M10 2L5.8 6.2" stroke="#1b3a82" stroke-width="2" stroke-linecap="round"/></svg>
<svg class="a" style="left:1489px;top:828px" width="10" height="10" viewBox="0 0 10 10"><path d="M1 1L9 9M9 1L1 9" stroke="#1f3b4b" stroke-width="2.3" stroke-linecap="round"/></svg>
<span class="t" style="left:765.40px;top:864.3px;font-size:31px;line-height:35px;color:#000;transform:scaleX(0.9178);-webkit-text-stroke:0.6px #dae5e7;">Ch1</span>
<svg class="a" style="left:936px;top:876px" width="10" height="9.5" viewBox="0 0 10 9.5"><path d="M0 0H10L5.0 9.5Z" fill="#000"/></svg>
<span class="t" style="left:765.40px;top:927.8px;font-size:31px;line-height:35px;color:#000;transform:scaleX(0.9530);-webkit-text-stroke:0.6px #dae5e7;">Ch2</span>
<svg class="a" style="left:936px;top:939px" width="10" height="9.5" viewBox="0 0 10 9.5"><path d="M0 0H10L5.0 9.5Z" fill="#000"/></svg>
<div class="b" style="left:760px;top:911px;width:189px;height:1px;background:#8f9597;"></div>
<div class="b" style="left:949px;top:851px;width:549px;height:60px;background:#000;"></div>
<div class="b" style="left:949px;top:911px;width:549px;height:2px;background:#dfe3e4;"></div>
<div class="b" style="left:949px;top:913px;width:549px;height:61px;background:#000;"></div>
<div class="b" style="left:949px;top:913px;width:549px;height:1px;background:#9aa0a2;"></div>
<div class="b" style="left:949px;top:892px;width:549px;height:18px;background:#808080;border:1px solid #d9d9d9;box-sizing:border-box;"></div>
<div class="b" style="left:950px;top:893px;width:522.8px;height:16px;background:#00ff00;"></div>
<div class="b" style="left:950px;top:899px;width:532.2px;height:3px;background:#000;"></div>
<div class="b" style="left:949px;top:914px;width:549px;height:18px;background:#808080;border:1px solid #d9d9d9;box-sizing:border-box;"></div>
<div class="b" style="left:950px;top:915px;width:525.9000000000001px;height:16px;background:#00ff00;"></div>
<div class="b" style="left:950px;top:921px;width:532.2px;height:3px;background:#000;"></div>
<span class="t" style="left:1321.50px;top:854.8px;font-size:33px;line-height:37px;color:#00ff00;transform:scaleX(0.9091);">114.555</span>
<span class="t" style="left:1455.10px;top:854.8px;font-size:33px;line-height:37px;color:#00ff00;transform:scaleX(0.8966);">dB</span>
<span class="t" style="left:1321.50px;top:934.8px;font-size:33px;line-height:37px;color:#00ff00;transform:scaleX(0.9285);">115.116</span>
<span class="t" style="left:1455.10px;top:934.8px;font-size:33px;line-height:37px;color:#00ff00;transform:scaleX(0.8966);">dB</span>
</section>
</body></html>
